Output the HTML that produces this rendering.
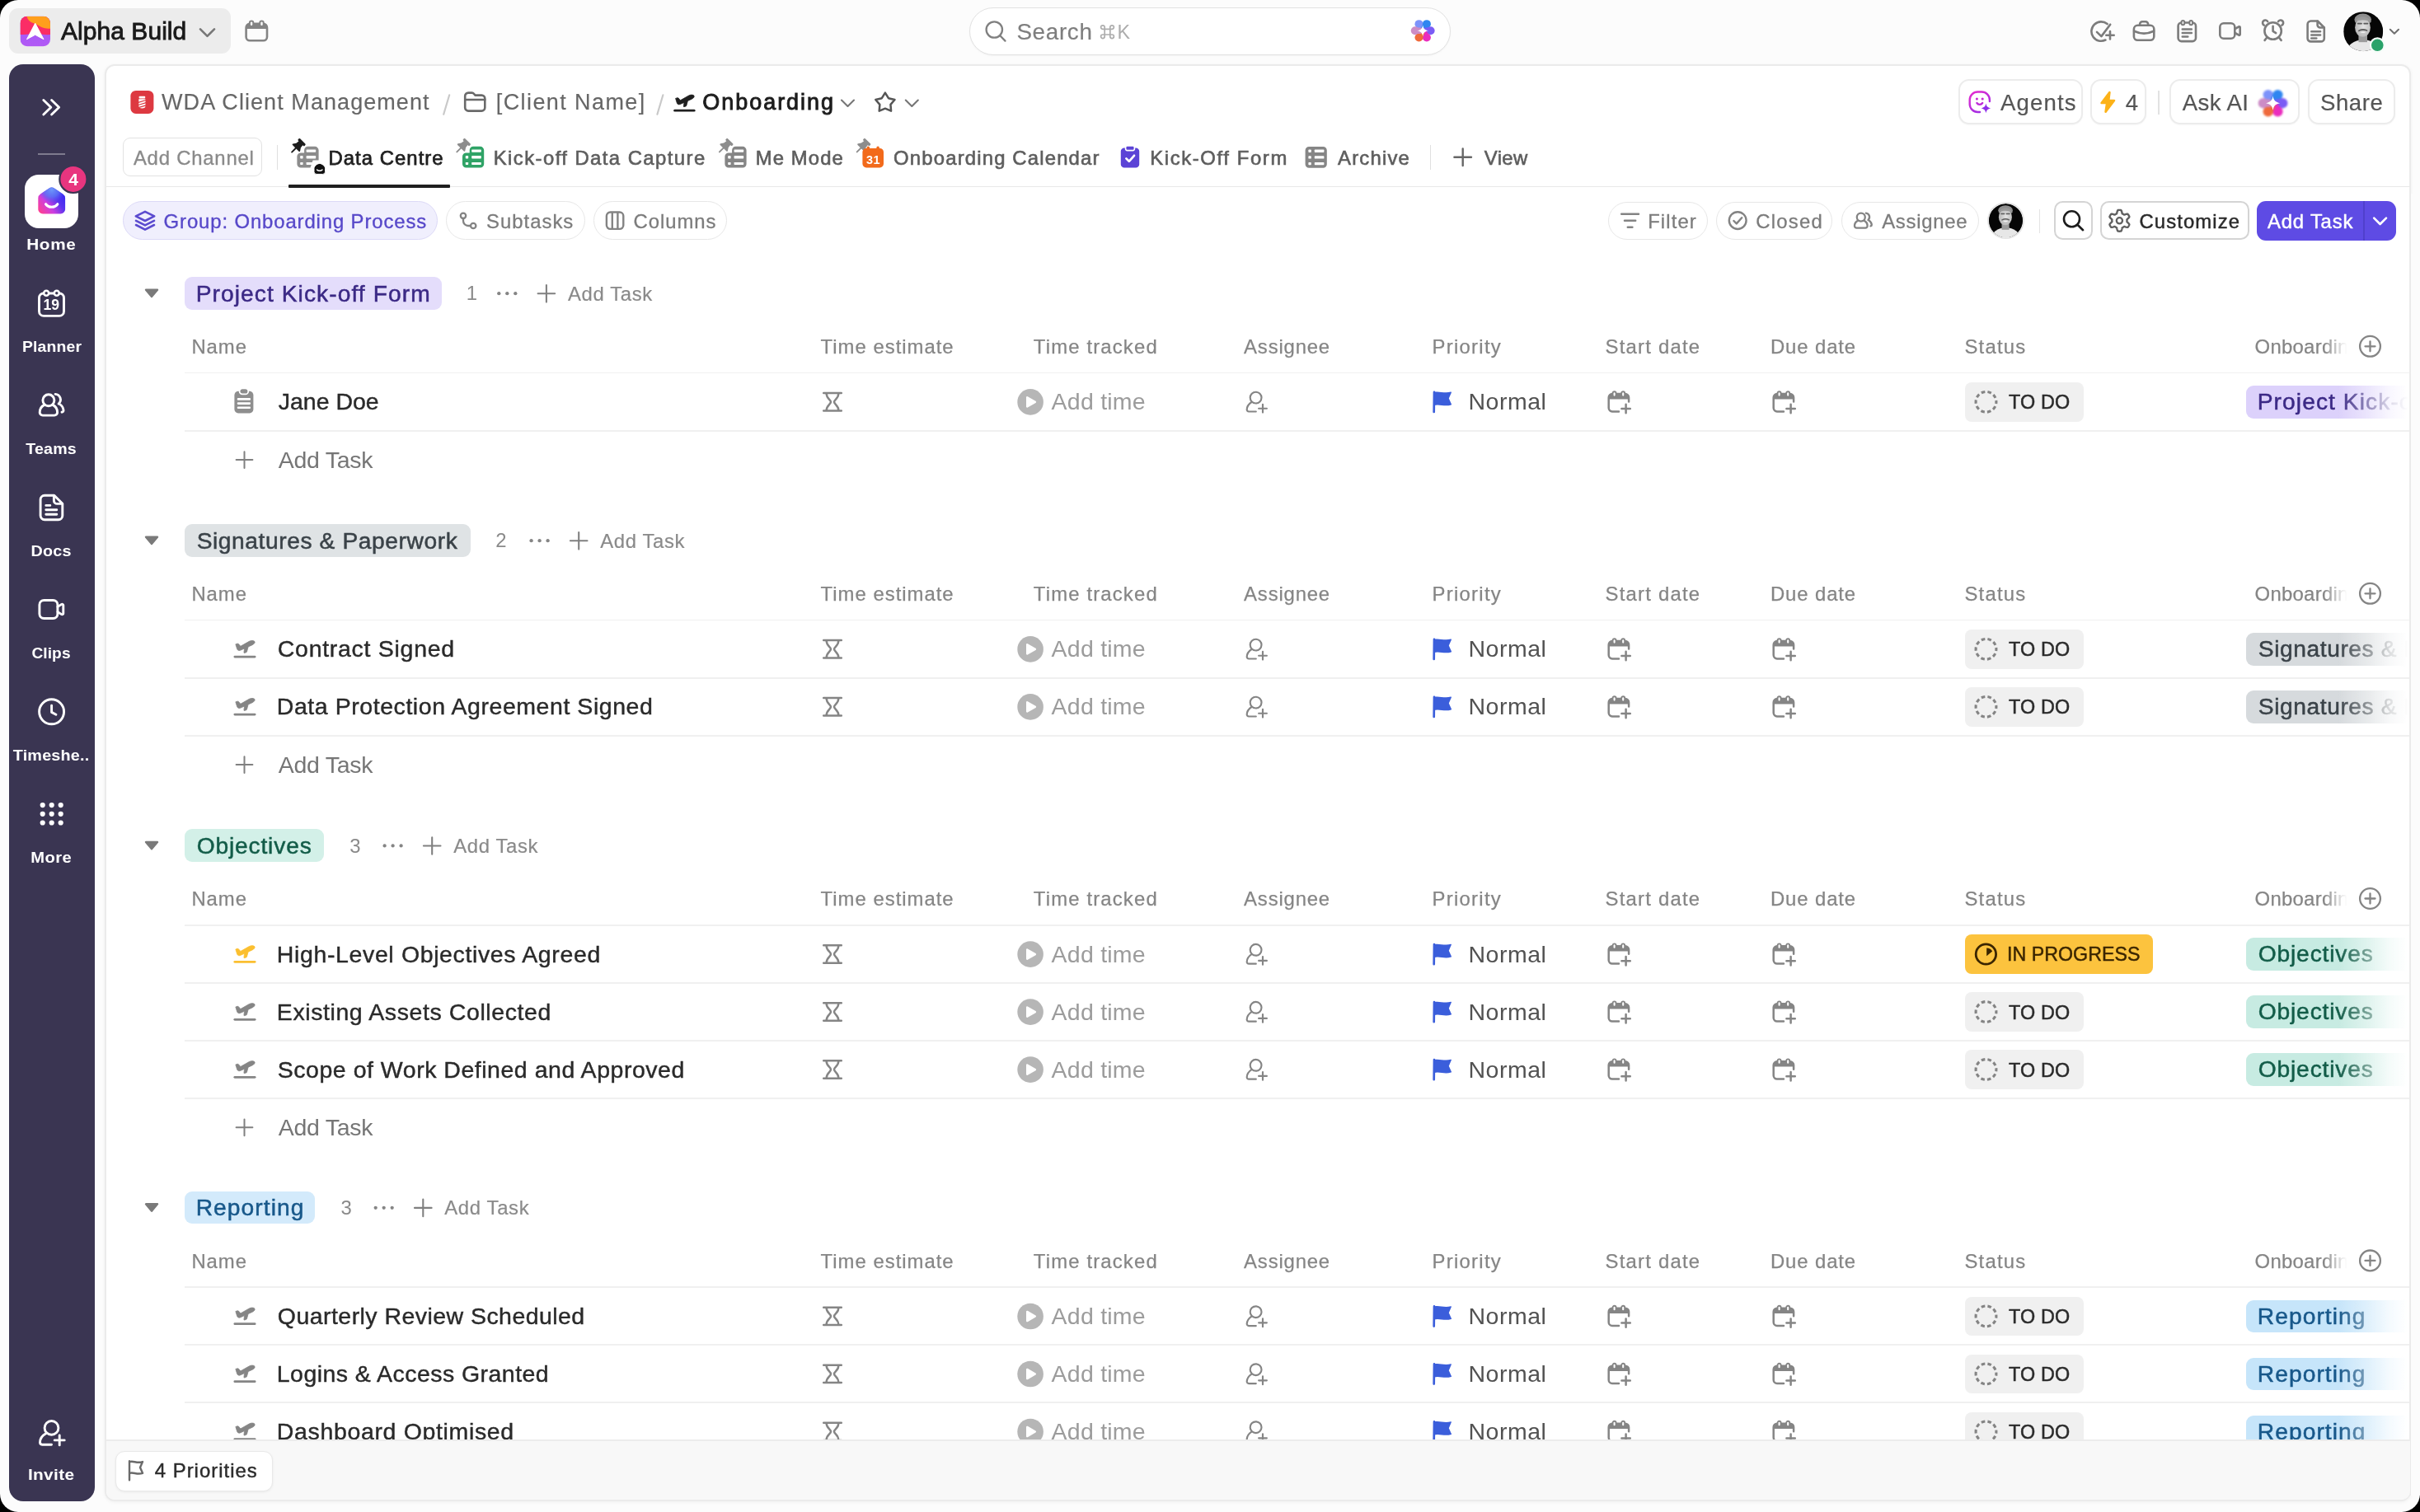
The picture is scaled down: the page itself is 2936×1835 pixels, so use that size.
<!DOCTYPE html><html><head><meta charset="utf-8"><title>ClickUp</title><style>

html,body{margin:0;padding:0;background:#000;}
body{width:2936px;height:1835px;position:relative;overflow:hidden;font-family:"Liberation Sans", sans-serif;}
#app{position:absolute;left:0;top:0;width:2936px;height:1835px;background:#fcfcfc;border-radius:22px;overflow:hidden;}
#app div{position:absolute;box-sizing:border-box;}
.t{position:absolute;white-space:nowrap;line-height:1;font-family:"Liberation Sans", sans-serif;}
svg.ic{position:absolute;left:0;top:0;overflow:visible;}
#app div.tl{left:0;top:0;width:2936px;height:1835px;will-change:transform;}

</style></head><body><div id="app">
<div style="left:10.6px;top:77.7px;width:104.2px;height:1744.3px;background:#3a3552;border-radius:17px;"></div>
<div style="left:127.0px;top:77.8px;width:2798.4px;height:1743.8px;background:#fff;border:2px solid #ebebeb;border-radius:12px;box-shadow:0 1px 4px rgba(0,0,0,.05);"></div>
<div style="left:11.0px;top:10.0px;width:268.5px;height:55.0px;background:#ececec;border-radius:11px;"></div>
<div style="left:1175.6px;top:9.0px;width:584.7px;height:58.0px;background:#fff;border:1.6px solid #e2e2e2;border-radius:29px;box-shadow:0 1px 2px rgba(0,0,0,.04);"></div>
<div style="left:46.0px;top:186.2px;width:32.6px;height:1.8px;background:rgba(255,255,255,.35);"></div>
<div style="left:30.3px;top:211.6px;width:65.0px;height:65.0px;background:#fff;border-radius:17px;"></div>
<div style="left:2376.3px;top:96.3px;width:151.2px;height:55.0px;background:#fff;border:2px solid #ececec;border-radius:13px;box-shadow:0 1px 2px rgba(0,0,0,.03);"></div>
<div style="left:2536.2px;top:96.3px;width:68.2px;height:55.0px;background:#fff;border:2px solid #ececec;border-radius:13px;box-shadow:0 1px 2px rgba(0,0,0,.03);"></div>
<div style="left:2632.1px;top:96.3px;width:158.2px;height:55.0px;background:#fff;border:2px solid #ececec;border-radius:13px;box-shadow:0 1px 2px rgba(0,0,0,.03);"></div>
<div style="left:2800.3px;top:96.3px;width:106.2px;height:55.0px;background:#fff;border:2px solid #ececec;border-radius:13px;box-shadow:0 1px 2px rgba(0,0,0,.03);"></div>
<div style="left:2617.8px;top:109.5px;width:1.8px;height:29.0px;background:#e2e2e2;"></div>
<div style="left:128.5px;top:225.6px;width:2795.0px;height:1.8px;background:#e8e8e8;"></div>
<div style="left:149.0px;top:167.3px;width:169.0px;height:46.8px;background:#fff;border:1.6px solid #e2e2e2;border-radius:9px;"></div>
<div style="left:335.8px;top:176.0px;width:1.6px;height:30.0px;background:#e0e0e0;"></div>
<div style="left:349.7px;top:223.6px;width:196.6px;height:4.2px;background:#1f1f1f;border-radius:1px;"></div>
<div style="left:1734.8px;top:175.6px;width:1.6px;height:30.0px;background:#e0e0e0;"></div>
<div style="left:148.8px;top:244.3px;width:382.4px;height:47.0px;background:#f0effd;border:1.6px solid #dcd9f7;border-radius:24px;"></div>
<div style="left:541.3px;top:244.3px;width:168.8px;height:47.0px;background:#fff;border:1.9px solid #e7e7e7;border-radius:24px;"></div>
<div style="left:719.8px;top:244.3px;width:162.4px;height:47.0px;background:#fff;border:1.9px solid #e7e7e7;border-radius:24px;"></div>
<div style="left:1950.5px;top:244.5px;width:121.0px;height:46.6px;background:#fff;border:1.9px solid #e7e7e7;border-radius:24px;"></div>
<div style="left:2081.5px;top:244.5px;width:141.7px;height:46.6px;background:#fff;border:1.9px solid #e7e7e7;border-radius:24px;"></div>
<div style="left:2233.5px;top:244.5px;width:167.4px;height:46.6px;background:#fff;border:1.9px solid #e7e7e7;border-radius:24px;"></div>
<div style="left:2473.6px;top:254.0px;width:1.6px;height:29.0px;background:#e4e4e4;"></div>
<div style="left:2491.8px;top:244.2px;width:46.8px;height:46.9px;background:#fff;border:2px solid #d4d4d4;border-radius:10.5px;"></div>
<div style="left:2548.3px;top:244.2px;width:180.6px;height:46.9px;background:#fff;border:2px solid #d4d4d4;border-radius:10.5px;"></div>
<div style="left:2737.6px;top:243.7px;width:169.7px;height:48.0px;background:#5e4be4;border-radius:11px;"></div>
<div style="left:2867.0px;top:243.7px;width:1.8px;height:48.0px;background:#5040cc;"></div>
<div style="left:224.2px;top:336.0px;width:311.4px;height:39.6px;background:#e4ddfb;border-radius:9px;"></div>
<div style="left:224.2px;top:451.6px;width:2699.4px;height:1.8px;background:#f0f0f0;"></div>
<div style="left:224.2px;top:521.8px;width:2699.4px;height:1.8px;background:#f0f0f0;"></div>
<div style="left:2383.6px;top:464.0px;width:144.2px;height:47.6px;background:#f0f0f0;border-radius:8px;"></div>
<div style="left:2725.3px;top:467.9px;width:260.0px;height:39.7px;background:#dcd1fb;border-radius:9px;"></div>
<div style="left:224.2px;top:636.0px;width:346.9px;height:39.6px;background:#dfe3e5;border-radius:9px;"></div>
<div style="left:224.2px;top:751.6px;width:2699.4px;height:1.8px;background:#f0f0f0;"></div>
<div style="left:224.2px;top:821.8px;width:2699.4px;height:1.8px;background:#f0f0f0;"></div>
<div style="left:2383.6px;top:764.0px;width:144.2px;height:47.6px;background:#f0f0f0;border-radius:8px;"></div>
<div style="left:2725.3px;top:767.9px;width:260.0px;height:39.7px;background:#d6dadd;border-radius:9px;"></div>
<div style="left:224.2px;top:891.8px;width:2699.4px;height:1.8px;background:#f0f0f0;"></div>
<div style="left:2383.6px;top:834.0px;width:144.2px;height:47.6px;background:#f0f0f0;border-radius:8px;"></div>
<div style="left:2725.3px;top:837.9px;width:260.0px;height:39.7px;background:#d6dadd;border-radius:9px;"></div>
<div style="left:224.2px;top:1006.2px;width:168.9px;height:39.6px;background:#d3f0e8;border-radius:9px;"></div>
<div style="left:224.2px;top:1121.8px;width:2699.4px;height:1.8px;background:#f0f0f0;"></div>
<div style="left:224.2px;top:1192.0px;width:2699.4px;height:1.8px;background:#f0f0f0;"></div>
<div style="left:2383.8px;top:1133.8px;width:228.6px;height:48.3px;background:#fcc33e;border-radius:8px;"></div>
<div style="left:2725.3px;top:1138.1px;width:260.0px;height:39.7px;background:#c7ebe2;border-radius:9px;"></div>
<div style="left:224.2px;top:1262.0px;width:2699.4px;height:1.8px;background:#f0f0f0;"></div>
<div style="left:2383.6px;top:1204.2px;width:144.2px;height:47.6px;background:#f0f0f0;border-radius:8px;"></div>
<div style="left:2725.3px;top:1208.1px;width:260.0px;height:39.7px;background:#c7ebe2;border-radius:9px;"></div>
<div style="left:224.2px;top:1332.0px;width:2699.4px;height:1.8px;background:#f0f0f0;"></div>
<div style="left:2383.6px;top:1274.2px;width:144.2px;height:47.6px;background:#f0f0f0;border-radius:8px;"></div>
<div style="left:2725.3px;top:1278.1px;width:260.0px;height:39.7px;background:#c7ebe2;border-radius:9px;"></div>
<div style="left:224.2px;top:1445.6px;width:158.0px;height:39.6px;background:#d3eafb;border-radius:9px;"></div>
<div style="left:224.2px;top:1561.2px;width:2699.4px;height:1.8px;background:#f0f0f0;"></div>
<div style="left:224.2px;top:1631.4px;width:2699.4px;height:1.8px;background:#f0f0f0;"></div>
<div style="left:2383.6px;top:1573.6px;width:144.2px;height:47.6px;background:#f0f0f0;border-radius:8px;"></div>
<div style="left:2725.3px;top:1577.5px;width:260.0px;height:39.7px;background:#c6e5fa;border-radius:9px;"></div>
<div style="left:224.2px;top:1701.4px;width:2699.4px;height:1.8px;background:#f0f0f0;"></div>
<div style="left:2383.6px;top:1643.6px;width:144.2px;height:47.6px;background:#f0f0f0;border-radius:8px;"></div>
<div style="left:2725.3px;top:1647.5px;width:260.0px;height:39.7px;background:#c6e5fa;border-radius:9px;"></div>
<div style="left:224.2px;top:1771.4px;width:2699.4px;height:1.8px;background:#f0f0f0;"></div>
<div style="left:2383.6px;top:1713.6px;width:144.2px;height:47.6px;background:#f0f0f0;border-radius:8px;"></div>
<div style="left:2725.3px;top:1717.5px;width:260.0px;height:39.7px;background:#c6e5fa;border-radius:9px;"></div>
<svg class="ic" width="2936" height="1835" viewBox="0 0 2936 1835">
<g transform="translate(24.50,19.70)"><defs><clipPath id="lgc"><rect x="0" y="0" width="36.5" height="36.5" rx="8.5"/></clipPath>
<linearGradient id="lgp" x1="0" y1="0" x2="0" y2="1"><stop offset="0" stop-color="#9b5cf7"/><stop offset="1" stop-color="#b259f5"/></linearGradient></defs>
<g clip-path="url(#lgc)"><rect width="37" height="37" fill="url(#lgp)"/>
<path d="M0,0H37V22.4C30,22.6 24,22.2 18,20.4 C12,22.2 6,22.6 0,22.2Z" fill="#fb2d66"/>
<path d="M8,0H37V15C30,15 26,14 22,11 C17,8 10,8 8,0Z" fill="#ff9f1c"/>
<path d="M18.2,8.5 L28.5,28 L18.2,22.5 L8,28 Z" fill="#fff" stroke="#fff" stroke-width="1" stroke-linejoin="round"/></g></g>
<g transform="translate(243.00,35.30)"><path d="M0,0 L8.5,8.5 L17,0" fill="none" stroke="#777" stroke-width="2.6" stroke-linecap="round" stroke-linejoin="round"/></g>
<g transform="translate(297.30,24.60)"><rect x="1.3" y="4.3" width="25.4" height="20.4" rx="4.5" fill="none" stroke="#848484" stroke-width="2.6"/>
<path d="M1.3,10.5V8.8a4.5,4.5 0 0 1 4.5,-4.5h16.4a4.5,4.5 0 0 1 4.5,4.5v1.7z" fill="#848484"/>
<rect x="5.6" y="0.8" width="4.4" height="6.6" rx="2.2" fill="#fcfcfc" stroke="#848484" stroke-width="2"/>
<rect x="18" y="0.8" width="4.4" height="6.6" rx="2.2" fill="#fcfcfc" stroke="#848484" stroke-width="2"/></g>
<g transform="translate(1195.30,25.00)"><circle cx="11" cy="11" r="9.7" fill="none" stroke="#808080" stroke-width="2.3"/><path d="M18,18.2L24.2,24.6" stroke="#808080" stroke-width="2.3" stroke-linecap="round"/></g>
<g transform="translate(1335.00,30.20)"><path d="M5.2,5.2H11.8V11.8H5.2Z M5.2,5.2H2.9A2.3,2.3 0 1 1 5.2,2.9Z M11.8,5.2V2.9A2.3,2.3 0 1 1 14.1,5.2Z M11.8,11.8H14.1A2.3,2.3 0 1 1 11.8,14.1Z M5.2,11.8V14.1A2.3,2.3 0 1 1 2.9,11.8Z" fill="none" stroke="#adadad" stroke-width="1.7"/></g>
<g transform="translate(1711.70,22.80) scale(1.0)"><g style="filter:blur(0.7px)"><path d="M12.75,11.47L9.80,6.36" stroke="#7d93fa" stroke-width="7.4" stroke-linecap="round"/><circle cx="9.80" cy="6.36" r="5" fill="#7d93fa"/><path d="M16.25,11.47L19.20,6.36" stroke="#2f86f0" stroke-width="7.4" stroke-linecap="round"/><circle cx="19.20" cy="6.36" r="5" fill="#2f86f0"/><path d="M18.00,14.50L23.90,14.50" stroke="#7b5cf5" stroke-width="7.4" stroke-linecap="round"/><circle cx="23.90" cy="14.50" r="5" fill="#7b5cf5"/><path d="M16.25,17.53L19.20,22.64" stroke="#ea2dbe" stroke-width="7.4" stroke-linecap="round"/><circle cx="19.20" cy="22.64" r="5" fill="#ea2dbe"/><path d="M12.75,17.53L9.80,22.64" stroke="#ef6a3c" stroke-width="7.4" stroke-linecap="round"/><circle cx="9.80" cy="22.64" r="5" fill="#ef6a3c"/><path d="M11.00,14.50L5.10,14.50" stroke="#cc8cc6" stroke-width="7.4" stroke-linecap="round"/><circle cx="5.10" cy="14.50" r="5" fill="#cc8cc6"/></g><path d="M14.5,7.6C15.3,12 17,13.7 21.4,14.5C17,15.3 15.3,17 14.5,21.4C13.7,17 12,15.3 7.6,14.5C12,13.7 13.7,12 14.5,7.6Z" fill="#fff" style="filter:blur(0.5px)"/></g>
<g transform="translate(2536.00,24.50)"><path d="M20.6,4.6A11.7,11.7 0 1 0 18.4,24" fill="none" stroke="#7c7c7c" stroke-width="2.6" stroke-linecap="round" stroke-linejoin="round"/><path d="M8,14.4L13.4,19.6L24.2,5.2" fill="none" stroke="#7c7c7c" stroke-width="2.6" stroke-linecap="round" stroke-linejoin="round"/><path d="M24,13.6V23M19.3,18.3H28.7" fill="none" stroke="#7c7c7c" stroke-width="2.6" stroke-linecap="round" stroke-linejoin="round"/></g>
<g transform="translate(2587.60,24.30)"><rect x="1.3" y="6.5" width="24.4" height="18" rx="4.5" fill="none" stroke="#7c7c7c" stroke-width="2.6" stroke-linecap="round" stroke-linejoin="round"/><path d="M8.5,6.5V5a3,3 0 0 1 3,-3h4a3,3 0 0 1 3,3v1.5" fill="none" stroke="#7c7c7c" stroke-width="2.6" stroke-linecap="round" stroke-linejoin="round"/><path d="M1.5,13.5C9,17 18,17 25.5,13.5" fill="none" stroke="#7c7c7c" stroke-width="2.6" stroke-linecap="round" stroke-linejoin="round"/></g>
<g transform="translate(2641.30,24.00)"><rect x="1.3" y="3.5" width="21.4" height="22.6" rx="4" fill="none" stroke="#7c7c7c" stroke-width="2.6" stroke-linecap="round" stroke-linejoin="round"/><rect x="5.3" y="0.9" width="3.6" height="5.4" rx="1.8" fill="#fcfcfc" stroke="#7c7c7c" stroke-width="2"/><rect x="15.1" y="0.9" width="3.6" height="5.4" rx="1.8" fill="#fcfcfc" stroke="#7c7c7c" stroke-width="2"/><path d="M6.5,11.5H17.5M6.5,16H17.5M6.5,20.5H13" fill="none" stroke="#7c7c7c" stroke-width="2.6" stroke-linecap="round" stroke-linejoin="round" stroke-width="2.2"/></g>
<g transform="translate(2692.00,27.00)"><rect x="1.3" y="1.3" width="18" height="18.4" rx="4.5" fill="none" stroke="#7c7c7c" stroke-width="2.6" stroke-linecap="round" stroke-linejoin="round"/><path d="M19.5,8L24.3,5.3a1,1 0 0 1 1.4,0.9v8.6a1,1 0 0 1 -1.4,0.9L19.5,13" fill="none" stroke="#7c7c7c" stroke-width="2.6" stroke-linecap="round" stroke-linejoin="round"/></g>
<g transform="translate(2744.60,23.50)"><circle cx="13" cy="14" r="10.2" fill="none" stroke="#7c7c7c" stroke-width="2.6" stroke-linecap="round" stroke-linejoin="round"/><path d="M13,8.3V14.3L16.6,16.6" fill="none" stroke="#7c7c7c" stroke-width="2.6" stroke-linecap="round" stroke-linejoin="round"/><path d="M2.2,7.2A3.3,3.3 0 1 1 6.6,2.6" fill="none" stroke="#7c7c7c" stroke-width="2.6" stroke-linecap="round" stroke-linejoin="round"/><path d="M23.8,7.2A3.3,3.3 0 1 0 19.4,2.6" fill="none" stroke="#7c7c7c" stroke-width="2.6" stroke-linecap="round" stroke-linejoin="round"/><path d="M5.3,22.5L3,25.4M20.7,22.5L23,25.4" fill="none" stroke="#7c7c7c" stroke-width="2.6" stroke-linecap="round" stroke-linejoin="round"/></g>
<g transform="translate(2798.30,24.20)"><path d="M5.3,1.3H13.5L21.5,9.3V22.2a4,4 0 0 1 -4,4H5.3a4,4 0 0 1 -4,-4V5.3a4,4 0 0 1 4,-4Z" fill="none" stroke="#7c7c7c" stroke-width="2.6" stroke-linecap="round" stroke-linejoin="round"/><path d="M13.3,1.5V6a3.3,3.3 0 0 0 3.3,3.3H21.3" fill="none" stroke="#7c7c7c" stroke-width="2.6" stroke-linecap="round" stroke-linejoin="round"/><path d="M6,14H16.8M6,18.3H16.8M6,22.3H12" fill="none" stroke="#7c7c7c" stroke-width="2.6" stroke-linecap="round" stroke-linejoin="round" stroke-width="2.1"/></g>
<g transform="translate(2867.20,38.20)"><defs><clipPath id="av1"><circle cx="0" cy="0" r="24"/></clipPath>
<radialGradient id="avf1" cx="0.55" cy="0.45" r="0.6"><stop offset="0" stop-color="#e4e4e4"/><stop offset="1" stop-color="#b4b4b4"/></radialGradient></defs>
<g clip-path="url(#av1)"><rect x="-24" y="-24" width="48" height="48" fill="#060606"/>
<g style="filter:blur(0.53px)">
<ellipse cx="0.0" cy="25.92" rx="20.64" ry="15.84" fill="#e7e7e7"/>
<rect x="-5.76" y="2.88" width="10.56" height="10.08" fill="#9c9c9c"/>
<ellipse cx="-0.48" cy="-14.399999999999999" rx="10.32" ry="7.199999999999999" fill="#8e8e8e"/>
<ellipse cx="-0.72" cy="-4.800000000000001" rx="9.36" ry="11.28" fill="url(#avf1)"/>
<path d="M-10.08,-12.0C-7.199999999999999,-19.68 7.199999999999999,-19.68 9.600000000000001,-11.040000000000001C4.800000000000001,-14.879999999999999 -4.800000000000001,-14.399999999999999 -10.08,-12.0Z" fill="#9a9a9a"/>
<path d="M-6.48,-9.600000000000001h4.32M0.96,-9.600000000000001h4.32" stroke="#5a5a5a" stroke-width="1.6800000000000002" stroke-linecap="round"/>
<path d="M-5.28,-0.96C-2.4000000000000004,-2.4000000000000004 1.44,-2.4000000000000004 4.32,-1.2000000000000002" stroke="#5f5f5f" stroke-width="1.7999999999999998" fill="none" stroke-linecap="round"/>
<path d="M-4.08,0.48C-1.44,2.4000000000000004 0.96,2.4000000000000004 3.3600000000000003,0.48Z" fill="#f4f4f4"/>
</g></g></g>
<g transform="translate(2884.30,54.80)"><circle cx="0" cy="0" r="8.4" fill="#29a269" stroke="#f4fcf8" stroke-width="2.2"/></g>
<g transform="translate(2899.80,35.80)"><path d="M0,0 L5.1,5 L10.2,0" fill="none" stroke="#707070" stroke-width="2" stroke-linecap="round" stroke-linejoin="round"/></g>
<g transform="translate(51.30,120.00)"><path d="M1.5,1.5L10.5,10.3L1.5,19M11.3,1.5L20.3,10.3L11.3,19" fill="none" stroke="#fff" stroke-width="2.9" stroke-linecap="round" stroke-linejoin="round"/></g>
<g transform="translate(46.20,226.60)"><defs><linearGradient id="hm" x1="0.98" y1="0.3" x2="0.05" y2="0.95"><stop offset="0" stop-color="#3a28f2"/><stop offset=".3" stop-color="#5a34ee"/><stop offset=".62" stop-color="#cc3ee0"/><stop offset="1" stop-color="#ff3f8f"/></linearGradient>
<radialGradient id="hm2" cx="0.5" cy="0.08" r="0.5"><stop offset="0" stop-color="#6f98fa"/><stop offset=".55" stop-color="#5c7cf6" stop-opacity=".75"/><stop offset="1" stop-color="#5a5cf4" stop-opacity="0"/></radialGradient></defs>
<path id="hmp" d="M13,2.1a6.2,6.2 0 0 1 7,0l10.2,6.8a6,6 0 0 1 2.7,5v13.4a5.6,5.6 0 0 1 -5.6,5.6H5.7a5.6,5.6 0 0 1 -5.6,-5.6V13.9a6,6 0 0 1 2.7,-5z" fill="url(#hm)"/>
<path d="M13,2.1a6.2,6.2 0 0 1 7,0l10.2,6.8a6,6 0 0 1 2.7,5v13.4a5.6,5.6 0 0 1 -5.6,5.6H5.7a5.6,5.6 0 0 1 -5.6,-5.6V13.9a6,6 0 0 1 2.7,-5z" fill="url(#hm2)"/>
<path d="M9.4,21.2c3.2,4.6 11,4.6 14.2,0" fill="none" stroke="#fff" stroke-width="3.2" stroke-linecap="round"/></g>
<g transform="translate(88.90,217.40)"><circle cx="0" cy="0" r="16.6" fill="#e8357f" stroke="#3a3552" stroke-width="2.2"/></g>
<g transform="translate(46.00,351.20)"><rect x="1.5" y="4.8" width="30" height="27.4" rx="5.5" fill="none" stroke="#fff" stroke-width="2.9" stroke-linecap="round" stroke-linejoin="round"/>
<circle cx="10.2" cy="4.6" r="3" fill="#3a3552" stroke="#fff" stroke-width="2.6"/><circle cx="22.8" cy="4.6" r="3" fill="#3a3552" stroke="#fff" stroke-width="2.6"/></g>
<g transform="translate(46.60,475.20)"><circle cx="12.3" cy="10.6" r="7" fill="none" stroke="#fff" stroke-width="2.9" stroke-linecap="round" stroke-linejoin="round"/><path d="M7.2,16.2C4,17.8 1.6,21.4 1.6,25.3a3.6,3.6 0 0 0 3.6,3.6H19.4a3.6,3.6 0 0 0 3.6,-3.6C23,21.4 20.6,17.8 17.4,16.2" fill="none" stroke="#fff" stroke-width="2.9" stroke-linecap="round" stroke-linejoin="round"/>
<path d="M20.5,3.2a6.6,6.6 0 0 1 4,11.6 M25.6,15.2c2.8,1.8 4.6,4.6 4.8,7.6a2,2 0 0 1 -2,2.2" fill="none" stroke="#fff" stroke-width="2.9" stroke-linecap="round" stroke-linejoin="round"/></g>
<g transform="translate(47.80,599.80)"><path d="M6.3,1.5H18L28,11.5V26a5,5 0 0 1 -5,5H6.3a5,5 0 0 1 -5,-5V6.5a5,5 0 0 1 5,-5Z" fill="none" stroke="#fff" stroke-width="2.9" stroke-linecap="round" stroke-linejoin="round"/><path d="M17.6,1.8V7.6a4,4 0 0 0 4,4H27.6" fill="none" stroke="#fff" stroke-width="2.9" stroke-linecap="round" stroke-linejoin="round"/><path d="M8,13.6H13M8,19H21M8,24.4H21" fill="none" stroke="#fff" stroke-width="2.9" stroke-linecap="round" stroke-linejoin="round" stroke-width="2.6"/></g>
<g transform="translate(46.40,727.00)"><rect x="1.5" y="1.5" width="22" height="22" rx="5.5" fill="none" stroke="#fff" stroke-width="2.9" stroke-linecap="round" stroke-linejoin="round"/><path d="M23.6,9.4L28.3,6.4a1.4,1.4 0 0 1 2.1,1.2v9.8a1.4,1.4 0 0 1 -2.1,1.2L23.6,15.6" fill="none" stroke="#fff" stroke-width="2.9" stroke-linecap="round" stroke-linejoin="round"/></g>
<g transform="translate(62.60,863.80)"><circle cx="0" cy="0" r="15" fill="none" stroke="#fff" stroke-width="2.9" stroke-linecap="round" stroke-linejoin="round"/><path d="M0,-7.5V0.6L5.4,3.4" fill="none" stroke="#fff" stroke-width="2.9" stroke-linecap="round" stroke-linejoin="round"/></g>
<g transform="translate(48.60,974.00)"><circle cx="3.1" cy="3.1" r="3.1" fill="#fff"/><circle cx="3.1" cy="13.8" r="3.1" fill="#fff"/><circle cx="3.1" cy="24.5" r="3.1" fill="#fff"/><circle cx="14.1" cy="3.1" r="3.1" fill="#fff"/><circle cx="14.1" cy="13.8" r="3.1" fill="#fff"/><circle cx="14.1" cy="24.5" r="3.1" fill="#fff"/><circle cx="25.1" cy="3.1" r="3.1" fill="#fff"/><circle cx="25.1" cy="13.8" r="3.1" fill="#fff"/><circle cx="25.1" cy="24.5" r="3.1" fill="#fff"/></g>
<g transform="translate(47.00,1722.60)"><circle cx="15.5" cy="10.3" r="8.4" fill="none" stroke="#fff" stroke-width="2.9" stroke-linecap="round" stroke-linejoin="round"/><path d="M9,17C4.5,19.6 1.5,23.8 1.5,28a2.6,2.6 0 0 0 2.6,2.6H15.5" fill="none" stroke="#fff" stroke-width="2.9" stroke-linecap="round" stroke-linejoin="round"/><path d="M25.2,19.3V31.3M19.2,25.3H31.2" fill="none" stroke="#fff" stroke-width="2.9" stroke-linecap="round" stroke-linejoin="round"/></g>
<g transform="translate(158.40,109.90)"><rect width="28" height="28" rx="6.4" fill="#dd3941"/>
<rect x="10.2" y="6.9" width="7.6" height="2.7" rx="0.9" fill="#fff"/>
<path d="M9.9,10.4H18.1V18.6a4.1,3 0 0 1 -8.2,0Z" fill="#fff"/>
<path d="M9.3,14.4L18.7,11.6M9.3,17.6L18.7,14.8M9.3,20.8L18.7,18" stroke="#dd3941" stroke-width="1.25"/></g>
<g transform="translate(538.20,115.30)"><path d="M7,0L0,23.5" stroke="#c9c9c9" stroke-width="2.2" stroke-linecap="round"/></g>
<g transform="translate(562.90,111.00)"><path d="M1.3,8.5V5.6a4,4 0 0 1 4,-4h4.4a3,3 0 0 1 2.3,1.1l1.6,1.9H21.4a4,4 0 0 1 4,4V19.6a4,4 0 0 1 -4,4H5.3a4,4 0 0 1 -4,-4Z" fill="none" stroke="#6a6a6a" stroke-width="2.6" stroke-linecap="round" stroke-linejoin="round"/><path d="M1.5,10H25.3" fill="none" stroke="#6a6a6a" stroke-width="2.6" stroke-linecap="round" stroke-linejoin="round"/></g>
<g transform="translate(797.40,115.30)"><path d="M7,0L0,23.5" stroke="#c9c9c9" stroke-width="2.2" stroke-linecap="round"/></g>
<g transform="translate(817.40,113.60) scale(1.0)"><path d="M1.2,20.6H24.8" stroke="#1f1f1f" stroke-width="2.7" stroke-linecap="round" fill="none"/>
<path d="M2.2,5.8L4.6,5.1a1,1 0 0 1 1,0.3L8,8.2L18.2,2.4C20.4,1.2 23.4,1.2 24.6,2.6C25.4,3.8 24,5.6 21.8,6.6L17,8.8L15.4,14.6a1.2,1.2 0 0 1 -0.8,0.8L12.6,16a0.5,0.5 0 0 1 -0.6,-0.6L12.6,10.8L7.6,13C6,13.6 4.6,13 4,11.6Z" fill="#1f1f1f" stroke="#1f1f1f" stroke-width="0.8" stroke-linejoin="round"/></g>
<g transform="translate(1021.00,121.60)"><path d="M0,0 L7.5,7.3 L15,0" fill="none" stroke="#757575" stroke-width="2.1" stroke-linecap="round" stroke-linejoin="round"/></g>
<g transform="translate(1061.20,111.20)"><path d="M12.70,1.40L16.76,8.02L24.30,9.83L19.26,15.73L19.87,23.47L12.70,20.50L5.53,23.47L6.14,15.73L1.10,9.83L8.64,8.02Z" fill="none" stroke="#555" stroke-width="2.5" stroke-linejoin="round"/></g>
<g transform="translate(1098.80,121.60)"><path d="M0,0 L7.5,7.3 L15,0" fill="none" stroke="#757575" stroke-width="2.1" stroke-linecap="round" stroke-linejoin="round"/></g>
<g transform="translate(2388.60,110.40)"><defs><linearGradient id="ag" x1="0.2" y1="0" x2="0.8" y2="1"><stop offset="0" stop-color="#e02bd0"/><stop offset="1" stop-color="#9a2fe6"/></linearGradient></defs>
<path d="M13.4,25.6H10.8a9.7,9.7 0 0 1 -9.7,-9.7V10.8a9.7,9.7 0 0 1 9.7,-9.7h4.8a9.7,9.7 0 0 1 9.7,9.7V12.6" fill="none" stroke="url(#ag)" stroke-width="2.4" stroke-linecap="round"/>
<circle cx="9.8" cy="9.6" r="1.55" fill="#c92ad6"/><circle cx="16.6" cy="9.6" r="1.55" fill="#c92ad6"/>
<path d="M9.8,14.6c1.6,2.4 5.2,2.4 6.8,0" fill="none" stroke="#bf2ad9" stroke-width="2.3" stroke-linecap="round"/>
<path d="M20.8,15.2c0.8,3.8 2,5 5.8,5.8c-3.8,0.8 -5,2 -5.8,5.8c-0.8,-3.8 -2,-5 -5.8,-5.8c3.8,-0.8 5,-2 5.8,-5.8z" fill="#8f2eea"/></g>
<g transform="translate(2547.60,110.00)"><path d="M11.8,2L2,15H8.6L7,25.6L17.4,12H10.6Z" fill="#fcb218" stroke="#fcb218" stroke-width="2.6" stroke-linejoin="round"/></g>
<g transform="translate(2739.60,107.20) scale(1.24)"><g style="filter:blur(0.7px)"><path d="M12.75,11.47L9.80,6.36" stroke="#7d93fa" stroke-width="7.4" stroke-linecap="round"/><circle cx="9.80" cy="6.36" r="5" fill="#7d93fa"/><path d="M16.25,11.47L19.20,6.36" stroke="#2f86f0" stroke-width="7.4" stroke-linecap="round"/><circle cx="19.20" cy="6.36" r="5" fill="#2f86f0"/><path d="M18.00,14.50L23.90,14.50" stroke="#7b5cf5" stroke-width="7.4" stroke-linecap="round"/><circle cx="23.90" cy="14.50" r="5" fill="#7b5cf5"/><path d="M16.25,17.53L19.20,22.64" stroke="#ea2dbe" stroke-width="7.4" stroke-linecap="round"/><circle cx="19.20" cy="22.64" r="5" fill="#ea2dbe"/><path d="M12.75,17.53L9.80,22.64" stroke="#ef6a3c" stroke-width="7.4" stroke-linecap="round"/><circle cx="9.80" cy="22.64" r="5" fill="#ef6a3c"/><path d="M11.00,14.50L5.10,14.50" stroke="#cc8cc6" stroke-width="7.4" stroke-linecap="round"/><circle cx="5.10" cy="14.50" r="5" fill="#cc8cc6"/></g><path d="M14.5,7.6C15.3,12 17,13.7 21.4,14.5C17,15.3 15.3,17 14.5,21.4C13.7,17 12,15.3 7.6,14.5C12,13.7 13.7,12 14.5,7.6Z" fill="#fff" style="filter:blur(0.5px)"/></g>
<g transform="translate(351.80,168.60)"><g transform="translate(11.2,-1.4) rotate(45)"><path d="M1.6,0H10.4a1.1,1.1 0 0 1 1.1,1.1V2.2a1.1,1.1 0 0 1 -1.1,1.1H9.4L9.9,7.2L12.2,10.6a0.9,0.9 0 0 1 -0.8,1.4H0.6a0.9,0.9 0 0 1 -0.8,-1.4L2.1,7.2L2.6,3.3H1.6A1.1,1.1 0 0 1 0.5,2.2V1.1A1.1,1.1 0 0 1 1.6,0Z" fill="#1c1c1c"/><path d="M6,11.8V18.6" stroke="#1c1c1c" stroke-width="1.9" stroke-linecap="round"/></g></g>
<g transform="translate(360.40,177.80)"><path d="M13.2,0H21.6a4.6,4.6 0 0 1 4.6,4.6V21.2a4.6,4.6 0 0 1 -4.6,4.6H4.6a4.6,4.6 0 0 1 -4.6,-4.6V12.2a4.5,4.5 0 0 1 4.5,-4.5H8.7V4.5A4.5,4.5 0 0 1 13.2,0Z" fill="#8c8c8c"/><rect x="11.2" y="3.6" width="11.6" height="3.3" rx="0.7" fill="#fff"/><rect x="11.2" y="11.3" width="11.6" height="3.3" rx="0.7" fill="#fff"/><rect x="11.2" y="19.1" width="11.6" height="3.1" rx="0.7" fill="#fff"/><rect x="3.8" y="11.3" width="3.4" height="3.3" rx="0.7" fill="#fff"/><rect x="3.8" y="19.1" width="3.4" height="3.1" rx="0.7" fill="#fff"/><path d="M19.2,16.8H28V28H15.4Z" fill="#fff"/></g>
<g transform="translate(380.80,198.20)"><path d="M7,0.2C9.4,0.2 13.8,3.2 13.8,6V10.2a3,3 0 0 1 -3,3H3.2a3,3 0 0 1 -3,-3V6C0.2,3.2 4.6,0.2 7,0.2Z" fill="#111" stroke="#fff" stroke-width="1"/><path d="M3.8,7.8c1.6,1.8 4.8,1.8 6.4,0" stroke="#fff" stroke-width="1.5" fill="none" stroke-linecap="round"/></g>
<g transform="translate(552.00,168.40)"><g transform="translate(11.2,-1.4) rotate(45)"><path d="M1.6,0H10.4a1.1,1.1 0 0 1 1.1,1.1V2.2a1.1,1.1 0 0 1 -1.1,1.1H9.4L9.9,7.2L12.2,10.6a0.9,0.9 0 0 1 -0.8,1.4H0.6a0.9,0.9 0 0 1 -0.8,-1.4L2.1,7.2L2.6,3.3H1.6A1.1,1.1 0 0 1 0.5,2.2V1.1A1.1,1.1 0 0 1 1.6,0Z" fill="#8d8d8d"/><path d="M6,11.8V18.6" stroke="#8d8d8d" stroke-width="1.9" stroke-linecap="round"/></g></g>
<g transform="translate(561.00,177.80)"><path d="M13.2,0H21.6a4.6,4.6 0 0 1 4.6,4.6V21.2a4.6,4.6 0 0 1 -4.6,4.6H4.6a4.6,4.6 0 0 1 -4.6,-4.6V12.2a4.5,4.5 0 0 1 4.5,-4.5H8.7V4.5A4.5,4.5 0 0 1 13.2,0Z" fill="#2fa366"/><rect x="11.2" y="3.6" width="11.6" height="3.3" rx="0.7" fill="#fff"/><rect x="11.2" y="11.3" width="11.6" height="3.3" rx="0.7" fill="#fff"/><rect x="11.2" y="19.1" width="11.6" height="3.1" rx="0.7" fill="#fff"/><rect x="3.8" y="11.3" width="3.4" height="3.3" rx="0.7" fill="#fff"/><rect x="3.8" y="19.1" width="3.4" height="3.1" rx="0.7" fill="#fff"/></g>
<g transform="translate(870.60,168.40)"><g transform="translate(11.2,-1.4) rotate(45)"><path d="M1.6,0H10.4a1.1,1.1 0 0 1 1.1,1.1V2.2a1.1,1.1 0 0 1 -1.1,1.1H9.4L9.9,7.2L12.2,10.6a0.9,0.9 0 0 1 -0.8,1.4H0.6a0.9,0.9 0 0 1 -0.8,-1.4L2.1,7.2L2.6,3.3H1.6A1.1,1.1 0 0 1 0.5,2.2V1.1A1.1,1.1 0 0 1 1.6,0Z" fill="#8d8d8d"/><path d="M6,11.8V18.6" stroke="#8d8d8d" stroke-width="1.9" stroke-linecap="round"/></g></g>
<g transform="translate(879.40,177.80)"><path d="M13.2,0H21.6a4.6,4.6 0 0 1 4.6,4.6V21.2a4.6,4.6 0 0 1 -4.6,4.6H4.6a4.6,4.6 0 0 1 -4.6,-4.6V12.2a4.5,4.5 0 0 1 4.5,-4.5H8.7V4.5A4.5,4.5 0 0 1 13.2,0Z" fill="#858585"/><rect x="11.2" y="3.6" width="11.6" height="3.3" rx="0.7" fill="#fff"/><rect x="11.2" y="11.3" width="11.6" height="3.3" rx="0.7" fill="#fff"/><rect x="11.2" y="19.1" width="11.6" height="3.1" rx="0.7" fill="#fff"/><rect x="3.8" y="11.3" width="3.4" height="3.3" rx="0.7" fill="#fff"/><rect x="3.8" y="19.1" width="3.4" height="3.1" rx="0.7" fill="#fff"/></g>
<g transform="translate(1037.40,168.40)"><g transform="translate(11.2,-1.4) rotate(45)"><path d="M1.6,0H10.4a1.1,1.1 0 0 1 1.1,1.1V2.2a1.1,1.1 0 0 1 -1.1,1.1H9.4L9.9,7.2L12.2,10.6a0.9,0.9 0 0 1 -0.8,1.4H0.6a0.9,0.9 0 0 1 -0.8,-1.4L2.1,7.2L2.6,3.3H1.6A1.1,1.1 0 0 1 0.5,2.2V1.1A1.1,1.1 0 0 1 1.6,0Z" fill="#8d8d8d"/><path d="M6,11.8V18.6" stroke="#8d8d8d" stroke-width="1.9" stroke-linecap="round"/></g></g>
<g transform="translate(1046.00,177.40)"><path d="M5,2.6H21.4a4.6,4.6 0 0 1 4.6,4.6V21.4a4.6,4.6 0 0 1 -4.6,4.6H5A4.6,4.6 0 0 1 0.4,21.4V7.2A4.6,4.6 0 0 1 5,2.6Z" fill="#f26a1b"/>
<rect x="5.6" y="0" width="3.4" height="5.6" rx="1.7" fill="#f26a1b"/><rect x="17.4" y="0" width="3.4" height="5.6" rx="1.7" fill="#f26a1b"/></g>
<g transform="translate(1359.60,176.80)"><path d="M4.4,2.6H18.4A4.2,4.2 0 0 1 22.6,6.8V22.6A4.2,4.2 0 0 1 18.4,26.8H4.4A4.2,4.2 0 0 1 0.2,22.6V6.8A4.2,4.2 0 0 1 4.4,2.6Z" fill="#5b43d6"/>
<rect x="6" y="0.2" width="10.8" height="5.6" rx="2" fill="#5b43d6" stroke="#fff" stroke-width="1.6"/>
<path d="M6.8,15.6L10.2,19L16.4,12" fill="none" stroke="#fff" stroke-width="2.7" stroke-linecap="round" stroke-linejoin="round"/></g>
<g transform="translate(1583.60,178.00)"><path d="M4.6,0H21.6a4.6,4.6 0 0 1 4.6,4.6V21.2a4.6,4.6 0 0 1 -4.6,4.6H4.6a4.6,4.6 0 0 1 -4.6,-4.6V4.6A4.6,4.6 0 0 1 4.6,0Z" fill="#858585"/><rect x="11.2" y="3.6" width="11.6" height="3.3" rx="0.7" fill="#fff"/><rect x="11.2" y="11.3" width="11.6" height="3.3" rx="0.7" fill="#fff"/><rect x="11.2" y="19.1" width="11.6" height="3.1" rx="0.7" fill="#fff"/><rect x="3.8" y="11.3" width="3.4" height="3.3" rx="0.7" fill="#fff"/><rect x="3.8" y="19.1" width="3.4" height="3.1" rx="0.7" fill="#fff"/><rect x="3.8" y="3.6" width="3.4" height="3.3" rx="0.7" fill="#fff"/></g>
<g transform="translate(1764.40,180.40)"><path d="M10.3,0V20.6M0,10.3H20.6" stroke="#666" stroke-width="2.4" stroke-linecap="round"/></g>
<g transform="translate(163.60,255.60)"><path d="M12.4,1.2L23.6,6.8L12.4,12.4L1.2,6.8Z" fill="none" stroke="#5b4bcf" stroke-width="2.6" stroke-linejoin="round"/>
<path d="M1.4,12.2L12.4,17.8L23.4,12.2M1.4,17.4L12.4,23L23.4,17.4" fill="none" stroke="#5b4bcf" stroke-width="2.6" stroke-linejoin="round" stroke-linecap="round"/></g>
<g transform="translate(557.60,257.40)"><circle cx="4.4" cy="4.4" r="3.2" fill="none" stroke="#838383" stroke-width="2.3"/><circle cx="16.6" cy="16.6" r="3.2" fill="none" stroke="#838383" stroke-width="2.3"/><path d="M4.4,7.8V10.6a6,6 0 0 0 6,6H13.2" fill="none" stroke="#838383" stroke-width="2.3"/></g>
<g transform="translate(734.60,256.20)"><rect x="1.3" y="1.3" width="20.4" height="20.4" rx="4.6" fill="none" stroke="#838383" stroke-width="2.4"/><path d="M8.2,1.3V21.7M14.8,1.3V21.7" stroke="#838383" stroke-width="2.4"/></g>
<g transform="translate(1966.00,258.40)"><path d="M1.2,1.4H22M5,9.4H18.2M8.8,17.4H14.4" stroke="#838383" stroke-width="2.5" stroke-linecap="round"/></g>
<g transform="translate(2096.20,255.60)"><circle cx="12" cy="12" r="10.4" fill="none" stroke="#838383" stroke-width="2.4"/><path d="M7.2,12.4L10.6,15.8L17,8.6" fill="none" stroke="#838383" stroke-width="2.4" stroke-linecap="round" stroke-linejoin="round"/></g>
<g transform="translate(2248.80,256.20)"><circle cx="9" cy="7.4" r="5" fill="none" stroke="#838383" stroke-width="2.3"/><path d="M5.4,11.4C3,12.6 1.2,15.2 1.2,18a2.4,2.4 0 0 0 2.4,2.4H14.4a2.4,2.4 0 0 0 2.4,-2.4C16.8,15.2 15,12.6 12.6,11.4" fill="none" stroke="#838383" stroke-width="2.3" stroke-linecap="round"/>
<path d="M15,2.4a4.8,4.8 0 0 1 2.6,8.4M18.6,11.2c2,1.2 3.2,3.2 3.4,5.4a1.6,1.6 0 0 1 -1.4,1.6" fill="none" stroke="#838383" stroke-width="2.3" stroke-linecap="round"/></g>
<g transform="translate(2433.50,267.70)"><defs><clipPath id="av2"><circle cx="0" cy="0" r="20.6"/></clipPath>
<radialGradient id="avf2" cx="0.55" cy="0.45" r="0.6"><stop offset="0" stop-color="#e4e4e4"/><stop offset="1" stop-color="#b4b4b4"/></radialGradient></defs>
<g clip-path="url(#av2)"><rect x="-20.6" y="-20.6" width="41.2" height="41.2" fill="#060606"/>
<g style="filter:blur(0.45px)">
<ellipse cx="0.0" cy="22.248000000000005" rx="17.716" ry="13.596000000000002" fill="#e7e7e7"/>
<rect x="-4.944" y="2.472" width="9.064" height="8.652000000000001" fill="#9c9c9c"/>
<ellipse cx="-0.41200000000000003" cy="-12.360000000000001" rx="8.858" ry="6.180000000000001" fill="#8e8e8e"/>
<ellipse cx="-0.618" cy="-4.12" rx="8.034" ry="9.682" fill="url(#avf2)"/>
<path d="M-8.652000000000001,-10.3C-6.180000000000001,-16.892 6.180000000000001,-16.892 8.24,-9.476C4.12,-12.772 -4.12,-12.360000000000001 -8.652000000000001,-10.3Z" fill="#9a9a9a"/>
<path d="M-5.562000000000001,-8.24h3.708M0.8240000000000001,-8.24h3.708" stroke="#5a5a5a" stroke-width="1.4420000000000002" stroke-linecap="round"/>
<path d="M-4.532,-0.8240000000000001C-2.06,-2.06 1.236,-2.06 3.708,-1.03" stroke="#5f5f5f" stroke-width="1.5450000000000002" fill="none" stroke-linecap="round"/>
<path d="M-3.5020000000000007,0.41200000000000003C-1.236,2.06 0.8240000000000001,2.06 2.8840000000000003,0.41200000000000003Z" fill="#f4f4f4"/>
</g></g></g>
<g transform="translate(2433.50,267.70)"><circle cx="0" cy="0" r="21.6" fill="none" stroke="#e4e4e4" stroke-width="1.6"/></g>
<g transform="translate(2502.90,255.20)"><circle cx="10.6" cy="10.6" r="9.5" fill="none" stroke="#1c1c1c" stroke-width="2.6"/><path d="M17.6,17.6L24.2,24" stroke="#1c1c1c" stroke-width="2.6" stroke-linecap="round"/></g>
<g transform="translate(2558.40,254.80)"><path d="M25.90,13.00L25.89,13.45L25.87,13.90L25.83,14.35L25.77,14.80L25.42,15.19L24.74,15.49L24.00,15.74L23.25,15.94L22.51,16.09L21.82,16.21L21.44,16.41L21.31,16.70L21.18,16.99L21.03,17.27L20.88,17.55L20.72,17.82L20.54,18.09L20.36,18.35L20.17,18.60L20.19,19.03L20.43,19.69L20.67,20.41L20.88,21.16L21.03,21.92L21.11,22.66L20.94,23.17L20.58,23.44L20.21,23.69L19.84,23.94L19.45,24.17L19.06,24.39L18.65,24.59L18.25,24.78L17.83,24.96L17.31,24.85L16.71,24.41L16.13,23.90L15.58,23.35L15.08,22.78L14.63,22.24L14.27,22.01L13.95,22.05L13.63,22.08L13.32,22.09L13.00,22.10L12.68,22.09L12.37,22.08L12.05,22.05L11.73,22.01L11.37,22.24L10.92,22.78L10.42,23.35L9.87,23.90L9.29,24.41L8.69,24.85L8.17,24.96L7.75,24.78L7.35,24.59L6.94,24.39L6.55,24.17L6.16,23.94L5.79,23.69L5.42,23.44L5.06,23.17L4.89,22.66L4.97,21.92L5.12,21.16L5.33,20.41L5.57,19.69L5.81,19.03L5.83,18.60L5.64,18.35L5.46,18.09L5.28,17.82L5.12,17.55L4.97,17.27L4.82,16.99L4.69,16.70L4.56,16.41L4.18,16.21L3.49,16.09L2.75,15.94L2.00,15.74L1.26,15.49L0.58,15.19L0.23,14.80L0.17,14.35L0.13,13.90L0.11,13.45L0.10,13.00L0.11,12.55L0.13,12.10L0.17,11.65L0.23,11.20L0.58,10.81L1.26,10.51L2.00,10.26L2.75,10.06L3.49,9.91L4.18,9.79L4.56,9.59L4.69,9.30L4.82,9.01L4.97,8.73L5.12,8.45L5.28,8.18L5.46,7.91L5.64,7.65L5.83,7.40L5.81,6.97L5.57,6.31L5.33,5.59L5.12,4.84L4.97,4.08L4.89,3.34L5.06,2.83L5.42,2.56L5.79,2.31L6.16,2.06L6.55,1.83L6.94,1.61L7.35,1.41L7.75,1.22L8.17,1.04L8.69,1.15L9.29,1.59L9.87,2.10L10.42,2.65L10.92,3.22L11.37,3.76L11.73,3.99L12.05,3.95L12.37,3.92L12.68,3.91L13.00,3.90L13.32,3.91L13.63,3.92L13.95,3.95L14.27,3.99L14.63,3.76L15.08,3.22L15.58,2.65L16.13,2.10L16.71,1.59L17.31,1.15L17.83,1.04L18.25,1.22L18.65,1.41L19.06,1.61L19.45,1.83L19.84,2.06L20.21,2.31L20.58,2.56L20.94,2.83L21.11,3.34L21.03,4.08L20.88,4.84L20.67,5.59L20.43,6.31L20.19,6.97L20.17,7.40L20.36,7.65L20.54,7.91L20.72,8.18L20.88,8.45L21.03,8.73L21.18,9.01L21.31,9.30L21.44,9.59L21.82,9.79L22.51,9.91L23.25,10.06L24.00,10.26L24.74,10.51L25.42,10.81L25.77,11.20L25.83,11.65L25.87,12.10L25.89,12.55Z" transform="rotate(30 13 13)" fill="none" stroke="#606060" stroke-width="2.4" stroke-linejoin="round"/><circle cx="13" cy="13" r="3.6" fill="none" stroke="#606060" stroke-width="2.3"/></g>
<g transform="translate(2880.20,264.60)"><path d="M0,0 L7.4,7.4 L14.8,0" fill="none" stroke="#fff" stroke-width="2.6" stroke-linecap="round" stroke-linejoin="round"/></g>
<g transform="translate(175.40,350.30)"><path d="M1.6,1.4H15.6L8.6,9.8Z" fill="#7a7a7a" stroke="#7a7a7a" stroke-width="2.4" stroke-linejoin="round"/></g>
<g transform="translate(602.70,356.20)"><circle cx="2.6" cy="0" r="2.15" fill="#858585"/><circle cx="12.6" cy="0" r="2.15" fill="#858585"/><circle cx="22.6" cy="0" r="2.15" fill="#858585"/></g>
<g transform="translate(652.60,346.00)"><path d="M10.3,0V20.6M0,10.3H20.6" stroke="#808080" stroke-width="2.1" stroke-linecap="round"/></g>
<g transform="translate(284.40,470.80)"><rect x="0" y="4" width="23" height="26.6" rx="4.6" fill="#8e8e8e"/><rect x="6.2" y="0.6" width="10.6" height="7" rx="3.4" fill="#8e8e8e" stroke="#fff" stroke-width="1.7"/>
<path d="M4.6,13.6H18.4M4.6,18.8H18.4M4.6,24H18.4" stroke="#fff" stroke-width="2.6" stroke-linecap="round"/></g>
<g transform="translate(998.00,475.80)"><path d="M1.2,1.3H22.8M1.2,22.7H22.8" stroke="#858585" stroke-width="2.5" stroke-linecap="round" fill="none"/>
<path d="M4.6,1.5C4.6,8 10,9.2 10,12C10,14.8 4.6,16 4.6,22.5M19.4,1.5C19.4,8 14,9.2 14,12C14,14.8 19.4,16 19.4,22.5" stroke="#858585" stroke-width="2.5" fill="none"/></g>
<g transform="translate(1250.10,487.90)"><circle cx="0" cy="0" r="15.8" fill="#b6b6b6"/><path d="M-3.9,-5.6L5.8,0L-3.9,5.6Z" fill="#fff" stroke="#fff" stroke-width="2.4" stroke-linejoin="round"/></g>
<g transform="translate(1511.40,474.40)"><circle cx="12.2" cy="8.2" r="6.9" fill="none" stroke="#858585" stroke-width="2.15"/>
<path d="M7,13.6C3.6,16 1.4,19.4 1.3,22.6a2.4,2.4 0 0 0 2.4,2.5H12.4" fill="none" stroke="#858585" stroke-width="2.15" stroke-linecap="round"/>
<path d="M20.6,16.4V26.2M15.7,21.3H25.5" stroke="#858585" stroke-width="2.15" stroke-linecap="round"/></g>
<g transform="translate(1738.40,474.40)"><path d="M1.6,1.4L1.3,25.6" stroke="#3b5edb" stroke-width="2.7" stroke-linecap="round"/>
<path d="M1.6,1.6C7,-0.2 14,3.4 21.8,1.2a0.6,0.6 0 0 1 0.7,0.8L19.4,9.2L22.6,16.2a0.6,0.6 0 0 1 -0.4,0.8C14,19.4 7.4,15.6 1.5,17.6Z" fill="#3b5edb"/></g>
<g transform="translate(1950.40,474.20)"><path d="M13.6,25.2H5.6a4.3,4.3 0 0 1 -4.3,-4.3V8.2a4.3,4.3 0 0 1 4.3,-4.3H21.4a4.3,4.3 0 0 1 4.3,4.3V13.4" fill="none" stroke="#858585" stroke-width="2.5" stroke-linecap="round"/>
<path d="M1.3,10.2V8.2a4.3,4.3 0 0 1 4.3,-4.3H21.4a4.3,4.3 0 0 1 4.3,4.3v2z" fill="#858585"/>
<rect x="6.2" y="1" width="4" height="6.4" rx="2" fill="#fff" stroke="#858585" stroke-width="1.9"/><rect x="16.8" y="1" width="4" height="6.4" rx="2" fill="#fff" stroke="#858585" stroke-width="1.9"/>
<path d="M22.2,16.6V27M17,21.8H27.4" stroke="#858585" stroke-width="2.5" stroke-linecap="round"/></g>
<g transform="translate(2150.40,474.20)"><path d="M13.6,25.2H5.6a4.3,4.3 0 0 1 -4.3,-4.3V8.2a4.3,4.3 0 0 1 4.3,-4.3H21.4a4.3,4.3 0 0 1 4.3,4.3V13.4" fill="none" stroke="#858585" stroke-width="2.5" stroke-linecap="round"/>
<path d="M1.3,10.2V8.2a4.3,4.3 0 0 1 4.3,-4.3H21.4a4.3,4.3 0 0 1 4.3,4.3v2z" fill="#858585"/>
<rect x="6.2" y="1" width="4" height="6.4" rx="2" fill="#fff" stroke="#858585" stroke-width="1.9"/><rect x="16.8" y="1" width="4" height="6.4" rx="2" fill="#fff" stroke="#858585" stroke-width="1.9"/>
<path d="M22.2,16.6V27M17,21.8H27.4" stroke="#858585" stroke-width="2.5" stroke-linecap="round"/></g>
<g transform="translate(2409.50,487.80)"><circle cx="0" cy="0" r="12.4" fill="none" stroke="#848484" stroke-width="3.1" stroke-dasharray="4.6 3.19" stroke-dashoffset="2.3"/></g>
<g transform="translate(286.60,548.20)"><path d="M9.9,0V19.8M0,9.9H19.8" stroke="#808080" stroke-width="2.0" stroke-linecap="round"/></g>
<g transform="translate(175.40,650.30)"><path d="M1.6,1.4H15.6L8.6,9.8Z" fill="#7a7a7a" stroke="#7a7a7a" stroke-width="2.4" stroke-linejoin="round"/></g>
<g transform="translate(642.00,656.20)"><circle cx="2.6" cy="0" r="2.15" fill="#858585"/><circle cx="12.6" cy="0" r="2.15" fill="#858585"/><circle cx="22.6" cy="0" r="2.15" fill="#858585"/></g>
<g transform="translate(691.90,646.00)"><path d="M10.3,0V20.6M0,10.3H20.6" stroke="#808080" stroke-width="2.1" stroke-linecap="round"/></g>
<g transform="translate(283.60,775.90) scale(1.03)"><path d="M1.2,20.6H24.8" stroke="#858585" stroke-width="2.7" stroke-linecap="round" fill="none"/>
<path d="M2.2,5.8L4.6,5.1a1,1 0 0 1 1,0.3L8,8.2L18.2,2.4C20.4,1.2 23.4,1.2 24.6,2.6C25.4,3.8 24,5.6 21.8,6.6L17,8.8L15.4,14.6a1.2,1.2 0 0 1 -0.8,0.8L12.6,16a0.5,0.5 0 0 1 -0.6,-0.6L12.6,10.8L7.6,13C6,13.6 4.6,13 4,11.6Z" fill="#858585" stroke="#858585" stroke-width="0.8" stroke-linejoin="round"/></g>
<g transform="translate(998.00,775.80)"><path d="M1.2,1.3H22.8M1.2,22.7H22.8" stroke="#858585" stroke-width="2.5" stroke-linecap="round" fill="none"/>
<path d="M4.6,1.5C4.6,8 10,9.2 10,12C10,14.8 4.6,16 4.6,22.5M19.4,1.5C19.4,8 14,9.2 14,12C14,14.8 19.4,16 19.4,22.5" stroke="#858585" stroke-width="2.5" fill="none"/></g>
<g transform="translate(1250.10,787.90)"><circle cx="0" cy="0" r="15.8" fill="#b6b6b6"/><path d="M-3.9,-5.6L5.8,0L-3.9,5.6Z" fill="#fff" stroke="#fff" stroke-width="2.4" stroke-linejoin="round"/></g>
<g transform="translate(1511.40,774.40)"><circle cx="12.2" cy="8.2" r="6.9" fill="none" stroke="#858585" stroke-width="2.15"/>
<path d="M7,13.6C3.6,16 1.4,19.4 1.3,22.6a2.4,2.4 0 0 0 2.4,2.5H12.4" fill="none" stroke="#858585" stroke-width="2.15" stroke-linecap="round"/>
<path d="M20.6,16.4V26.2M15.7,21.3H25.5" stroke="#858585" stroke-width="2.15" stroke-linecap="round"/></g>
<g transform="translate(1738.40,774.40)"><path d="M1.6,1.4L1.3,25.6" stroke="#3b5edb" stroke-width="2.7" stroke-linecap="round"/>
<path d="M1.6,1.6C7,-0.2 14,3.4 21.8,1.2a0.6,0.6 0 0 1 0.7,0.8L19.4,9.2L22.6,16.2a0.6,0.6 0 0 1 -0.4,0.8C14,19.4 7.4,15.6 1.5,17.6Z" fill="#3b5edb"/></g>
<g transform="translate(1950.40,774.20)"><path d="M13.6,25.2H5.6a4.3,4.3 0 0 1 -4.3,-4.3V8.2a4.3,4.3 0 0 1 4.3,-4.3H21.4a4.3,4.3 0 0 1 4.3,4.3V13.4" fill="none" stroke="#858585" stroke-width="2.5" stroke-linecap="round"/>
<path d="M1.3,10.2V8.2a4.3,4.3 0 0 1 4.3,-4.3H21.4a4.3,4.3 0 0 1 4.3,4.3v2z" fill="#858585"/>
<rect x="6.2" y="1" width="4" height="6.4" rx="2" fill="#fff" stroke="#858585" stroke-width="1.9"/><rect x="16.8" y="1" width="4" height="6.4" rx="2" fill="#fff" stroke="#858585" stroke-width="1.9"/>
<path d="M22.2,16.6V27M17,21.8H27.4" stroke="#858585" stroke-width="2.5" stroke-linecap="round"/></g>
<g transform="translate(2150.40,774.20)"><path d="M13.6,25.2H5.6a4.3,4.3 0 0 1 -4.3,-4.3V8.2a4.3,4.3 0 0 1 4.3,-4.3H21.4a4.3,4.3 0 0 1 4.3,4.3V13.4" fill="none" stroke="#858585" stroke-width="2.5" stroke-linecap="round"/>
<path d="M1.3,10.2V8.2a4.3,4.3 0 0 1 4.3,-4.3H21.4a4.3,4.3 0 0 1 4.3,4.3v2z" fill="#858585"/>
<rect x="6.2" y="1" width="4" height="6.4" rx="2" fill="#fff" stroke="#858585" stroke-width="1.9"/><rect x="16.8" y="1" width="4" height="6.4" rx="2" fill="#fff" stroke="#858585" stroke-width="1.9"/>
<path d="M22.2,16.6V27M17,21.8H27.4" stroke="#858585" stroke-width="2.5" stroke-linecap="round"/></g>
<g transform="translate(2409.50,787.80)"><circle cx="0" cy="0" r="12.4" fill="none" stroke="#848484" stroke-width="3.1" stroke-dasharray="4.6 3.19" stroke-dashoffset="2.3"/></g>
<g transform="translate(283.60,845.90) scale(1.03)"><path d="M1.2,20.6H24.8" stroke="#858585" stroke-width="2.7" stroke-linecap="round" fill="none"/>
<path d="M2.2,5.8L4.6,5.1a1,1 0 0 1 1,0.3L8,8.2L18.2,2.4C20.4,1.2 23.4,1.2 24.6,2.6C25.4,3.8 24,5.6 21.8,6.6L17,8.8L15.4,14.6a1.2,1.2 0 0 1 -0.8,0.8L12.6,16a0.5,0.5 0 0 1 -0.6,-0.6L12.6,10.8L7.6,13C6,13.6 4.6,13 4,11.6Z" fill="#858585" stroke="#858585" stroke-width="0.8" stroke-linejoin="round"/></g>
<g transform="translate(998.00,845.80)"><path d="M1.2,1.3H22.8M1.2,22.7H22.8" stroke="#858585" stroke-width="2.5" stroke-linecap="round" fill="none"/>
<path d="M4.6,1.5C4.6,8 10,9.2 10,12C10,14.8 4.6,16 4.6,22.5M19.4,1.5C19.4,8 14,9.2 14,12C14,14.8 19.4,16 19.4,22.5" stroke="#858585" stroke-width="2.5" fill="none"/></g>
<g transform="translate(1250.10,857.90)"><circle cx="0" cy="0" r="15.8" fill="#b6b6b6"/><path d="M-3.9,-5.6L5.8,0L-3.9,5.6Z" fill="#fff" stroke="#fff" stroke-width="2.4" stroke-linejoin="round"/></g>
<g transform="translate(1511.40,844.40)"><circle cx="12.2" cy="8.2" r="6.9" fill="none" stroke="#858585" stroke-width="2.15"/>
<path d="M7,13.6C3.6,16 1.4,19.4 1.3,22.6a2.4,2.4 0 0 0 2.4,2.5H12.4" fill="none" stroke="#858585" stroke-width="2.15" stroke-linecap="round"/>
<path d="M20.6,16.4V26.2M15.7,21.3H25.5" stroke="#858585" stroke-width="2.15" stroke-linecap="round"/></g>
<g transform="translate(1738.40,844.40)"><path d="M1.6,1.4L1.3,25.6" stroke="#3b5edb" stroke-width="2.7" stroke-linecap="round"/>
<path d="M1.6,1.6C7,-0.2 14,3.4 21.8,1.2a0.6,0.6 0 0 1 0.7,0.8L19.4,9.2L22.6,16.2a0.6,0.6 0 0 1 -0.4,0.8C14,19.4 7.4,15.6 1.5,17.6Z" fill="#3b5edb"/></g>
<g transform="translate(1950.40,844.20)"><path d="M13.6,25.2H5.6a4.3,4.3 0 0 1 -4.3,-4.3V8.2a4.3,4.3 0 0 1 4.3,-4.3H21.4a4.3,4.3 0 0 1 4.3,4.3V13.4" fill="none" stroke="#858585" stroke-width="2.5" stroke-linecap="round"/>
<path d="M1.3,10.2V8.2a4.3,4.3 0 0 1 4.3,-4.3H21.4a4.3,4.3 0 0 1 4.3,4.3v2z" fill="#858585"/>
<rect x="6.2" y="1" width="4" height="6.4" rx="2" fill="#fff" stroke="#858585" stroke-width="1.9"/><rect x="16.8" y="1" width="4" height="6.4" rx="2" fill="#fff" stroke="#858585" stroke-width="1.9"/>
<path d="M22.2,16.6V27M17,21.8H27.4" stroke="#858585" stroke-width="2.5" stroke-linecap="round"/></g>
<g transform="translate(2150.40,844.20)"><path d="M13.6,25.2H5.6a4.3,4.3 0 0 1 -4.3,-4.3V8.2a4.3,4.3 0 0 1 4.3,-4.3H21.4a4.3,4.3 0 0 1 4.3,4.3V13.4" fill="none" stroke="#858585" stroke-width="2.5" stroke-linecap="round"/>
<path d="M1.3,10.2V8.2a4.3,4.3 0 0 1 4.3,-4.3H21.4a4.3,4.3 0 0 1 4.3,4.3v2z" fill="#858585"/>
<rect x="6.2" y="1" width="4" height="6.4" rx="2" fill="#fff" stroke="#858585" stroke-width="1.9"/><rect x="16.8" y="1" width="4" height="6.4" rx="2" fill="#fff" stroke="#858585" stroke-width="1.9"/>
<path d="M22.2,16.6V27M17,21.8H27.4" stroke="#858585" stroke-width="2.5" stroke-linecap="round"/></g>
<g transform="translate(2409.50,857.80)"><circle cx="0" cy="0" r="12.4" fill="none" stroke="#848484" stroke-width="3.1" stroke-dasharray="4.6 3.19" stroke-dashoffset="2.3"/></g>
<g transform="translate(286.60,918.20)"><path d="M9.9,0V19.8M0,9.9H19.8" stroke="#808080" stroke-width="2.0" stroke-linecap="round"/></g>
<g transform="translate(175.40,1020.50)"><path d="M1.6,1.4H15.6L8.6,9.8Z" fill="#7a7a7a" stroke="#7a7a7a" stroke-width="2.4" stroke-linejoin="round"/></g>
<g transform="translate(464.00,1026.40)"><circle cx="2.6" cy="0" r="2.15" fill="#858585"/><circle cx="12.6" cy="0" r="2.15" fill="#858585"/><circle cx="22.6" cy="0" r="2.15" fill="#858585"/></g>
<g transform="translate(513.90,1016.20)"><path d="M10.3,0V20.6M0,10.3H20.6" stroke="#808080" stroke-width="2.1" stroke-linecap="round"/></g>
<g transform="translate(283.60,1146.10) scale(1.03)"><path d="M1.2,20.6H24.8" stroke="#fbbf30" stroke-width="2.7" stroke-linecap="round" fill="none"/>
<path d="M2.2,5.8L4.6,5.1a1,1 0 0 1 1,0.3L8,8.2L18.2,2.4C20.4,1.2 23.4,1.2 24.6,2.6C25.4,3.8 24,5.6 21.8,6.6L17,8.8L15.4,14.6a1.2,1.2 0 0 1 -0.8,0.8L12.6,16a0.5,0.5 0 0 1 -0.6,-0.6L12.6,10.8L7.6,13C6,13.6 4.6,13 4,11.6Z" fill="#fbbf30" stroke="#fbbf30" stroke-width="0.8" stroke-linejoin="round"/></g>
<g transform="translate(998.00,1146.00)"><path d="M1.2,1.3H22.8M1.2,22.7H22.8" stroke="#858585" stroke-width="2.5" stroke-linecap="round" fill="none"/>
<path d="M4.6,1.5C4.6,8 10,9.2 10,12C10,14.8 4.6,16 4.6,22.5M19.4,1.5C19.4,8 14,9.2 14,12C14,14.8 19.4,16 19.4,22.5" stroke="#858585" stroke-width="2.5" fill="none"/></g>
<g transform="translate(1250.10,1158.10)"><circle cx="0" cy="0" r="15.8" fill="#b6b6b6"/><path d="M-3.9,-5.6L5.8,0L-3.9,5.6Z" fill="#fff" stroke="#fff" stroke-width="2.4" stroke-linejoin="round"/></g>
<g transform="translate(1511.40,1144.60)"><circle cx="12.2" cy="8.2" r="6.9" fill="none" stroke="#858585" stroke-width="2.15"/>
<path d="M7,13.6C3.6,16 1.4,19.4 1.3,22.6a2.4,2.4 0 0 0 2.4,2.5H12.4" fill="none" stroke="#858585" stroke-width="2.15" stroke-linecap="round"/>
<path d="M20.6,16.4V26.2M15.7,21.3H25.5" stroke="#858585" stroke-width="2.15" stroke-linecap="round"/></g>
<g transform="translate(1738.40,1144.60)"><path d="M1.6,1.4L1.3,25.6" stroke="#3b5edb" stroke-width="2.7" stroke-linecap="round"/>
<path d="M1.6,1.6C7,-0.2 14,3.4 21.8,1.2a0.6,0.6 0 0 1 0.7,0.8L19.4,9.2L22.6,16.2a0.6,0.6 0 0 1 -0.4,0.8C14,19.4 7.4,15.6 1.5,17.6Z" fill="#3b5edb"/></g>
<g transform="translate(1950.40,1144.40)"><path d="M13.6,25.2H5.6a4.3,4.3 0 0 1 -4.3,-4.3V8.2a4.3,4.3 0 0 1 4.3,-4.3H21.4a4.3,4.3 0 0 1 4.3,4.3V13.4" fill="none" stroke="#858585" stroke-width="2.5" stroke-linecap="round"/>
<path d="M1.3,10.2V8.2a4.3,4.3 0 0 1 4.3,-4.3H21.4a4.3,4.3 0 0 1 4.3,4.3v2z" fill="#858585"/>
<rect x="6.2" y="1" width="4" height="6.4" rx="2" fill="#fff" stroke="#858585" stroke-width="1.9"/><rect x="16.8" y="1" width="4" height="6.4" rx="2" fill="#fff" stroke="#858585" stroke-width="1.9"/>
<path d="M22.2,16.6V27M17,21.8H27.4" stroke="#858585" stroke-width="2.5" stroke-linecap="round"/></g>
<g transform="translate(2150.40,1144.40)"><path d="M13.6,25.2H5.6a4.3,4.3 0 0 1 -4.3,-4.3V8.2a4.3,4.3 0 0 1 4.3,-4.3H21.4a4.3,4.3 0 0 1 4.3,4.3V13.4" fill="none" stroke="#858585" stroke-width="2.5" stroke-linecap="round"/>
<path d="M1.3,10.2V8.2a4.3,4.3 0 0 1 4.3,-4.3H21.4a4.3,4.3 0 0 1 4.3,4.3v2z" fill="#858585"/>
<rect x="6.2" y="1" width="4" height="6.4" rx="2" fill="#fff" stroke="#858585" stroke-width="1.9"/><rect x="16.8" y="1" width="4" height="6.4" rx="2" fill="#fff" stroke="#858585" stroke-width="1.9"/>
<path d="M22.2,16.6V27M17,21.8H27.4" stroke="#858585" stroke-width="2.5" stroke-linecap="round"/></g>
<g transform="translate(2409.40,1158.00)"><circle cx="0" cy="0" r="12.2" fill="none" stroke="#3a2500" stroke-width="2.8"/><path d="M0.8,-7.4L0.8,2.2L7.8,-3.4A8.4,8.4 0 0 0 0.8,-7.4Z" fill="#3a2500"/></g>
<g transform="translate(283.60,1216.10) scale(1.03)"><path d="M1.2,20.6H24.8" stroke="#858585" stroke-width="2.7" stroke-linecap="round" fill="none"/>
<path d="M2.2,5.8L4.6,5.1a1,1 0 0 1 1,0.3L8,8.2L18.2,2.4C20.4,1.2 23.4,1.2 24.6,2.6C25.4,3.8 24,5.6 21.8,6.6L17,8.8L15.4,14.6a1.2,1.2 0 0 1 -0.8,0.8L12.6,16a0.5,0.5 0 0 1 -0.6,-0.6L12.6,10.8L7.6,13C6,13.6 4.6,13 4,11.6Z" fill="#858585" stroke="#858585" stroke-width="0.8" stroke-linejoin="round"/></g>
<g transform="translate(998.00,1216.00)"><path d="M1.2,1.3H22.8M1.2,22.7H22.8" stroke="#858585" stroke-width="2.5" stroke-linecap="round" fill="none"/>
<path d="M4.6,1.5C4.6,8 10,9.2 10,12C10,14.8 4.6,16 4.6,22.5M19.4,1.5C19.4,8 14,9.2 14,12C14,14.8 19.4,16 19.4,22.5" stroke="#858585" stroke-width="2.5" fill="none"/></g>
<g transform="translate(1250.10,1228.10)"><circle cx="0" cy="0" r="15.8" fill="#b6b6b6"/><path d="M-3.9,-5.6L5.8,0L-3.9,5.6Z" fill="#fff" stroke="#fff" stroke-width="2.4" stroke-linejoin="round"/></g>
<g transform="translate(1511.40,1214.60)"><circle cx="12.2" cy="8.2" r="6.9" fill="none" stroke="#858585" stroke-width="2.15"/>
<path d="M7,13.6C3.6,16 1.4,19.4 1.3,22.6a2.4,2.4 0 0 0 2.4,2.5H12.4" fill="none" stroke="#858585" stroke-width="2.15" stroke-linecap="round"/>
<path d="M20.6,16.4V26.2M15.7,21.3H25.5" stroke="#858585" stroke-width="2.15" stroke-linecap="round"/></g>
<g transform="translate(1738.40,1214.60)"><path d="M1.6,1.4L1.3,25.6" stroke="#3b5edb" stroke-width="2.7" stroke-linecap="round"/>
<path d="M1.6,1.6C7,-0.2 14,3.4 21.8,1.2a0.6,0.6 0 0 1 0.7,0.8L19.4,9.2L22.6,16.2a0.6,0.6 0 0 1 -0.4,0.8C14,19.4 7.4,15.6 1.5,17.6Z" fill="#3b5edb"/></g>
<g transform="translate(1950.40,1214.40)"><path d="M13.6,25.2H5.6a4.3,4.3 0 0 1 -4.3,-4.3V8.2a4.3,4.3 0 0 1 4.3,-4.3H21.4a4.3,4.3 0 0 1 4.3,4.3V13.4" fill="none" stroke="#858585" stroke-width="2.5" stroke-linecap="round"/>
<path d="M1.3,10.2V8.2a4.3,4.3 0 0 1 4.3,-4.3H21.4a4.3,4.3 0 0 1 4.3,4.3v2z" fill="#858585"/>
<rect x="6.2" y="1" width="4" height="6.4" rx="2" fill="#fff" stroke="#858585" stroke-width="1.9"/><rect x="16.8" y="1" width="4" height="6.4" rx="2" fill="#fff" stroke="#858585" stroke-width="1.9"/>
<path d="M22.2,16.6V27M17,21.8H27.4" stroke="#858585" stroke-width="2.5" stroke-linecap="round"/></g>
<g transform="translate(2150.40,1214.40)"><path d="M13.6,25.2H5.6a4.3,4.3 0 0 1 -4.3,-4.3V8.2a4.3,4.3 0 0 1 4.3,-4.3H21.4a4.3,4.3 0 0 1 4.3,4.3V13.4" fill="none" stroke="#858585" stroke-width="2.5" stroke-linecap="round"/>
<path d="M1.3,10.2V8.2a4.3,4.3 0 0 1 4.3,-4.3H21.4a4.3,4.3 0 0 1 4.3,4.3v2z" fill="#858585"/>
<rect x="6.2" y="1" width="4" height="6.4" rx="2" fill="#fff" stroke="#858585" stroke-width="1.9"/><rect x="16.8" y="1" width="4" height="6.4" rx="2" fill="#fff" stroke="#858585" stroke-width="1.9"/>
<path d="M22.2,16.6V27M17,21.8H27.4" stroke="#858585" stroke-width="2.5" stroke-linecap="round"/></g>
<g transform="translate(2409.50,1228.00)"><circle cx="0" cy="0" r="12.4" fill="none" stroke="#848484" stroke-width="3.1" stroke-dasharray="4.6 3.19" stroke-dashoffset="2.3"/></g>
<g transform="translate(283.60,1286.10) scale(1.03)"><path d="M1.2,20.6H24.8" stroke="#858585" stroke-width="2.7" stroke-linecap="round" fill="none"/>
<path d="M2.2,5.8L4.6,5.1a1,1 0 0 1 1,0.3L8,8.2L18.2,2.4C20.4,1.2 23.4,1.2 24.6,2.6C25.4,3.8 24,5.6 21.8,6.6L17,8.8L15.4,14.6a1.2,1.2 0 0 1 -0.8,0.8L12.6,16a0.5,0.5 0 0 1 -0.6,-0.6L12.6,10.8L7.6,13C6,13.6 4.6,13 4,11.6Z" fill="#858585" stroke="#858585" stroke-width="0.8" stroke-linejoin="round"/></g>
<g transform="translate(998.00,1286.00)"><path d="M1.2,1.3H22.8M1.2,22.7H22.8" stroke="#858585" stroke-width="2.5" stroke-linecap="round" fill="none"/>
<path d="M4.6,1.5C4.6,8 10,9.2 10,12C10,14.8 4.6,16 4.6,22.5M19.4,1.5C19.4,8 14,9.2 14,12C14,14.8 19.4,16 19.4,22.5" stroke="#858585" stroke-width="2.5" fill="none"/></g>
<g transform="translate(1250.10,1298.10)"><circle cx="0" cy="0" r="15.8" fill="#b6b6b6"/><path d="M-3.9,-5.6L5.8,0L-3.9,5.6Z" fill="#fff" stroke="#fff" stroke-width="2.4" stroke-linejoin="round"/></g>
<g transform="translate(1511.40,1284.60)"><circle cx="12.2" cy="8.2" r="6.9" fill="none" stroke="#858585" stroke-width="2.15"/>
<path d="M7,13.6C3.6,16 1.4,19.4 1.3,22.6a2.4,2.4 0 0 0 2.4,2.5H12.4" fill="none" stroke="#858585" stroke-width="2.15" stroke-linecap="round"/>
<path d="M20.6,16.4V26.2M15.7,21.3H25.5" stroke="#858585" stroke-width="2.15" stroke-linecap="round"/></g>
<g transform="translate(1738.40,1284.60)"><path d="M1.6,1.4L1.3,25.6" stroke="#3b5edb" stroke-width="2.7" stroke-linecap="round"/>
<path d="M1.6,1.6C7,-0.2 14,3.4 21.8,1.2a0.6,0.6 0 0 1 0.7,0.8L19.4,9.2L22.6,16.2a0.6,0.6 0 0 1 -0.4,0.8C14,19.4 7.4,15.6 1.5,17.6Z" fill="#3b5edb"/></g>
<g transform="translate(1950.40,1284.40)"><path d="M13.6,25.2H5.6a4.3,4.3 0 0 1 -4.3,-4.3V8.2a4.3,4.3 0 0 1 4.3,-4.3H21.4a4.3,4.3 0 0 1 4.3,4.3V13.4" fill="none" stroke="#858585" stroke-width="2.5" stroke-linecap="round"/>
<path d="M1.3,10.2V8.2a4.3,4.3 0 0 1 4.3,-4.3H21.4a4.3,4.3 0 0 1 4.3,4.3v2z" fill="#858585"/>
<rect x="6.2" y="1" width="4" height="6.4" rx="2" fill="#fff" stroke="#858585" stroke-width="1.9"/><rect x="16.8" y="1" width="4" height="6.4" rx="2" fill="#fff" stroke="#858585" stroke-width="1.9"/>
<path d="M22.2,16.6V27M17,21.8H27.4" stroke="#858585" stroke-width="2.5" stroke-linecap="round"/></g>
<g transform="translate(2150.40,1284.40)"><path d="M13.6,25.2H5.6a4.3,4.3 0 0 1 -4.3,-4.3V8.2a4.3,4.3 0 0 1 4.3,-4.3H21.4a4.3,4.3 0 0 1 4.3,4.3V13.4" fill="none" stroke="#858585" stroke-width="2.5" stroke-linecap="round"/>
<path d="M1.3,10.2V8.2a4.3,4.3 0 0 1 4.3,-4.3H21.4a4.3,4.3 0 0 1 4.3,4.3v2z" fill="#858585"/>
<rect x="6.2" y="1" width="4" height="6.4" rx="2" fill="#fff" stroke="#858585" stroke-width="1.9"/><rect x="16.8" y="1" width="4" height="6.4" rx="2" fill="#fff" stroke="#858585" stroke-width="1.9"/>
<path d="M22.2,16.6V27M17,21.8H27.4" stroke="#858585" stroke-width="2.5" stroke-linecap="round"/></g>
<g transform="translate(2409.50,1298.00)"><circle cx="0" cy="0" r="12.4" fill="none" stroke="#848484" stroke-width="3.1" stroke-dasharray="4.6 3.19" stroke-dashoffset="2.3"/></g>
<g transform="translate(286.60,1358.40)"><path d="M9.9,0V19.8M0,9.9H19.8" stroke="#808080" stroke-width="2.0" stroke-linecap="round"/></g>
<g transform="translate(175.40,1459.90)"><path d="M1.6,1.4H15.6L8.6,9.8Z" fill="#7a7a7a" stroke="#7a7a7a" stroke-width="2.4" stroke-linejoin="round"/></g>
<g transform="translate(453.10,1465.80)"><circle cx="2.6" cy="0" r="2.15" fill="#858585"/><circle cx="12.6" cy="0" r="2.15" fill="#858585"/><circle cx="22.6" cy="0" r="2.15" fill="#858585"/></g>
<g transform="translate(503.00,1455.60)"><path d="M10.3,0V20.6M0,10.3H20.6" stroke="#808080" stroke-width="2.1" stroke-linecap="round"/></g>
<g transform="translate(283.60,1585.50) scale(1.03)"><path d="M1.2,20.6H24.8" stroke="#858585" stroke-width="2.7" stroke-linecap="round" fill="none"/>
<path d="M2.2,5.8L4.6,5.1a1,1 0 0 1 1,0.3L8,8.2L18.2,2.4C20.4,1.2 23.4,1.2 24.6,2.6C25.4,3.8 24,5.6 21.8,6.6L17,8.8L15.4,14.6a1.2,1.2 0 0 1 -0.8,0.8L12.6,16a0.5,0.5 0 0 1 -0.6,-0.6L12.6,10.8L7.6,13C6,13.6 4.6,13 4,11.6Z" fill="#858585" stroke="#858585" stroke-width="0.8" stroke-linejoin="round"/></g>
<g transform="translate(998.00,1585.40)"><path d="M1.2,1.3H22.8M1.2,22.7H22.8" stroke="#858585" stroke-width="2.5" stroke-linecap="round" fill="none"/>
<path d="M4.6,1.5C4.6,8 10,9.2 10,12C10,14.8 4.6,16 4.6,22.5M19.4,1.5C19.4,8 14,9.2 14,12C14,14.8 19.4,16 19.4,22.5" stroke="#858585" stroke-width="2.5" fill="none"/></g>
<g transform="translate(1250.10,1597.50)"><circle cx="0" cy="0" r="15.8" fill="#b6b6b6"/><path d="M-3.9,-5.6L5.8,0L-3.9,5.6Z" fill="#fff" stroke="#fff" stroke-width="2.4" stroke-linejoin="round"/></g>
<g transform="translate(1511.40,1584.00)"><circle cx="12.2" cy="8.2" r="6.9" fill="none" stroke="#858585" stroke-width="2.15"/>
<path d="M7,13.6C3.6,16 1.4,19.4 1.3,22.6a2.4,2.4 0 0 0 2.4,2.5H12.4" fill="none" stroke="#858585" stroke-width="2.15" stroke-linecap="round"/>
<path d="M20.6,16.4V26.2M15.7,21.3H25.5" stroke="#858585" stroke-width="2.15" stroke-linecap="round"/></g>
<g transform="translate(1738.40,1584.00)"><path d="M1.6,1.4L1.3,25.6" stroke="#3b5edb" stroke-width="2.7" stroke-linecap="round"/>
<path d="M1.6,1.6C7,-0.2 14,3.4 21.8,1.2a0.6,0.6 0 0 1 0.7,0.8L19.4,9.2L22.6,16.2a0.6,0.6 0 0 1 -0.4,0.8C14,19.4 7.4,15.6 1.5,17.6Z" fill="#3b5edb"/></g>
<g transform="translate(1950.40,1583.80)"><path d="M13.6,25.2H5.6a4.3,4.3 0 0 1 -4.3,-4.3V8.2a4.3,4.3 0 0 1 4.3,-4.3H21.4a4.3,4.3 0 0 1 4.3,4.3V13.4" fill="none" stroke="#858585" stroke-width="2.5" stroke-linecap="round"/>
<path d="M1.3,10.2V8.2a4.3,4.3 0 0 1 4.3,-4.3H21.4a4.3,4.3 0 0 1 4.3,4.3v2z" fill="#858585"/>
<rect x="6.2" y="1" width="4" height="6.4" rx="2" fill="#fff" stroke="#858585" stroke-width="1.9"/><rect x="16.8" y="1" width="4" height="6.4" rx="2" fill="#fff" stroke="#858585" stroke-width="1.9"/>
<path d="M22.2,16.6V27M17,21.8H27.4" stroke="#858585" stroke-width="2.5" stroke-linecap="round"/></g>
<g transform="translate(2150.40,1583.80)"><path d="M13.6,25.2H5.6a4.3,4.3 0 0 1 -4.3,-4.3V8.2a4.3,4.3 0 0 1 4.3,-4.3H21.4a4.3,4.3 0 0 1 4.3,4.3V13.4" fill="none" stroke="#858585" stroke-width="2.5" stroke-linecap="round"/>
<path d="M1.3,10.2V8.2a4.3,4.3 0 0 1 4.3,-4.3H21.4a4.3,4.3 0 0 1 4.3,4.3v2z" fill="#858585"/>
<rect x="6.2" y="1" width="4" height="6.4" rx="2" fill="#fff" stroke="#858585" stroke-width="1.9"/><rect x="16.8" y="1" width="4" height="6.4" rx="2" fill="#fff" stroke="#858585" stroke-width="1.9"/>
<path d="M22.2,16.6V27M17,21.8H27.4" stroke="#858585" stroke-width="2.5" stroke-linecap="round"/></g>
<g transform="translate(2409.50,1597.40)"><circle cx="0" cy="0" r="12.4" fill="none" stroke="#848484" stroke-width="3.1" stroke-dasharray="4.6 3.19" stroke-dashoffset="2.3"/></g>
<g transform="translate(283.60,1655.50) scale(1.03)"><path d="M1.2,20.6H24.8" stroke="#858585" stroke-width="2.7" stroke-linecap="round" fill="none"/>
<path d="M2.2,5.8L4.6,5.1a1,1 0 0 1 1,0.3L8,8.2L18.2,2.4C20.4,1.2 23.4,1.2 24.6,2.6C25.4,3.8 24,5.6 21.8,6.6L17,8.8L15.4,14.6a1.2,1.2 0 0 1 -0.8,0.8L12.6,16a0.5,0.5 0 0 1 -0.6,-0.6L12.6,10.8L7.6,13C6,13.6 4.6,13 4,11.6Z" fill="#858585" stroke="#858585" stroke-width="0.8" stroke-linejoin="round"/></g>
<g transform="translate(998.00,1655.40)"><path d="M1.2,1.3H22.8M1.2,22.7H22.8" stroke="#858585" stroke-width="2.5" stroke-linecap="round" fill="none"/>
<path d="M4.6,1.5C4.6,8 10,9.2 10,12C10,14.8 4.6,16 4.6,22.5M19.4,1.5C19.4,8 14,9.2 14,12C14,14.8 19.4,16 19.4,22.5" stroke="#858585" stroke-width="2.5" fill="none"/></g>
<g transform="translate(1250.10,1667.50)"><circle cx="0" cy="0" r="15.8" fill="#b6b6b6"/><path d="M-3.9,-5.6L5.8,0L-3.9,5.6Z" fill="#fff" stroke="#fff" stroke-width="2.4" stroke-linejoin="round"/></g>
<g transform="translate(1511.40,1654.00)"><circle cx="12.2" cy="8.2" r="6.9" fill="none" stroke="#858585" stroke-width="2.15"/>
<path d="M7,13.6C3.6,16 1.4,19.4 1.3,22.6a2.4,2.4 0 0 0 2.4,2.5H12.4" fill="none" stroke="#858585" stroke-width="2.15" stroke-linecap="round"/>
<path d="M20.6,16.4V26.2M15.7,21.3H25.5" stroke="#858585" stroke-width="2.15" stroke-linecap="round"/></g>
<g transform="translate(1738.40,1654.00)"><path d="M1.6,1.4L1.3,25.6" stroke="#3b5edb" stroke-width="2.7" stroke-linecap="round"/>
<path d="M1.6,1.6C7,-0.2 14,3.4 21.8,1.2a0.6,0.6 0 0 1 0.7,0.8L19.4,9.2L22.6,16.2a0.6,0.6 0 0 1 -0.4,0.8C14,19.4 7.4,15.6 1.5,17.6Z" fill="#3b5edb"/></g>
<g transform="translate(1950.40,1653.80)"><path d="M13.6,25.2H5.6a4.3,4.3 0 0 1 -4.3,-4.3V8.2a4.3,4.3 0 0 1 4.3,-4.3H21.4a4.3,4.3 0 0 1 4.3,4.3V13.4" fill="none" stroke="#858585" stroke-width="2.5" stroke-linecap="round"/>
<path d="M1.3,10.2V8.2a4.3,4.3 0 0 1 4.3,-4.3H21.4a4.3,4.3 0 0 1 4.3,4.3v2z" fill="#858585"/>
<rect x="6.2" y="1" width="4" height="6.4" rx="2" fill="#fff" stroke="#858585" stroke-width="1.9"/><rect x="16.8" y="1" width="4" height="6.4" rx="2" fill="#fff" stroke="#858585" stroke-width="1.9"/>
<path d="M22.2,16.6V27M17,21.8H27.4" stroke="#858585" stroke-width="2.5" stroke-linecap="round"/></g>
<g transform="translate(2150.40,1653.80)"><path d="M13.6,25.2H5.6a4.3,4.3 0 0 1 -4.3,-4.3V8.2a4.3,4.3 0 0 1 4.3,-4.3H21.4a4.3,4.3 0 0 1 4.3,4.3V13.4" fill="none" stroke="#858585" stroke-width="2.5" stroke-linecap="round"/>
<path d="M1.3,10.2V8.2a4.3,4.3 0 0 1 4.3,-4.3H21.4a4.3,4.3 0 0 1 4.3,4.3v2z" fill="#858585"/>
<rect x="6.2" y="1" width="4" height="6.4" rx="2" fill="#fff" stroke="#858585" stroke-width="1.9"/><rect x="16.8" y="1" width="4" height="6.4" rx="2" fill="#fff" stroke="#858585" stroke-width="1.9"/>
<path d="M22.2,16.6V27M17,21.8H27.4" stroke="#858585" stroke-width="2.5" stroke-linecap="round"/></g>
<g transform="translate(2409.50,1667.40)"><circle cx="0" cy="0" r="12.4" fill="none" stroke="#848484" stroke-width="3.1" stroke-dasharray="4.6 3.19" stroke-dashoffset="2.3"/></g>
<g transform="translate(283.60,1725.50) scale(1.03)"><path d="M1.2,20.6H24.8" stroke="#858585" stroke-width="2.7" stroke-linecap="round" fill="none"/>
<path d="M2.2,5.8L4.6,5.1a1,1 0 0 1 1,0.3L8,8.2L18.2,2.4C20.4,1.2 23.4,1.2 24.6,2.6C25.4,3.8 24,5.6 21.8,6.6L17,8.8L15.4,14.6a1.2,1.2 0 0 1 -0.8,0.8L12.6,16a0.5,0.5 0 0 1 -0.6,-0.6L12.6,10.8L7.6,13C6,13.6 4.6,13 4,11.6Z" fill="#858585" stroke="#858585" stroke-width="0.8" stroke-linejoin="round"/></g>
<g transform="translate(998.00,1725.40)"><path d="M1.2,1.3H22.8M1.2,22.7H22.8" stroke="#858585" stroke-width="2.5" stroke-linecap="round" fill="none"/>
<path d="M4.6,1.5C4.6,8 10,9.2 10,12C10,14.8 4.6,16 4.6,22.5M19.4,1.5C19.4,8 14,9.2 14,12C14,14.8 19.4,16 19.4,22.5" stroke="#858585" stroke-width="2.5" fill="none"/></g>
<g transform="translate(1250.10,1737.50)"><circle cx="0" cy="0" r="15.8" fill="#b6b6b6"/><path d="M-3.9,-5.6L5.8,0L-3.9,5.6Z" fill="#fff" stroke="#fff" stroke-width="2.4" stroke-linejoin="round"/></g>
<g transform="translate(1511.40,1724.00)"><circle cx="12.2" cy="8.2" r="6.9" fill="none" stroke="#858585" stroke-width="2.15"/>
<path d="M7,13.6C3.6,16 1.4,19.4 1.3,22.6a2.4,2.4 0 0 0 2.4,2.5H12.4" fill="none" stroke="#858585" stroke-width="2.15" stroke-linecap="round"/>
<path d="M20.6,16.4V26.2M15.7,21.3H25.5" stroke="#858585" stroke-width="2.15" stroke-linecap="round"/></g>
<g transform="translate(1738.40,1724.00)"><path d="M1.6,1.4L1.3,25.6" stroke="#3b5edb" stroke-width="2.7" stroke-linecap="round"/>
<path d="M1.6,1.6C7,-0.2 14,3.4 21.8,1.2a0.6,0.6 0 0 1 0.7,0.8L19.4,9.2L22.6,16.2a0.6,0.6 0 0 1 -0.4,0.8C14,19.4 7.4,15.6 1.5,17.6Z" fill="#3b5edb"/></g>
<g transform="translate(1950.40,1723.80)"><path d="M13.6,25.2H5.6a4.3,4.3 0 0 1 -4.3,-4.3V8.2a4.3,4.3 0 0 1 4.3,-4.3H21.4a4.3,4.3 0 0 1 4.3,4.3V13.4" fill="none" stroke="#858585" stroke-width="2.5" stroke-linecap="round"/>
<path d="M1.3,10.2V8.2a4.3,4.3 0 0 1 4.3,-4.3H21.4a4.3,4.3 0 0 1 4.3,4.3v2z" fill="#858585"/>
<rect x="6.2" y="1" width="4" height="6.4" rx="2" fill="#fff" stroke="#858585" stroke-width="1.9"/><rect x="16.8" y="1" width="4" height="6.4" rx="2" fill="#fff" stroke="#858585" stroke-width="1.9"/>
<path d="M22.2,16.6V27M17,21.8H27.4" stroke="#858585" stroke-width="2.5" stroke-linecap="round"/></g>
<g transform="translate(2150.40,1723.80)"><path d="M13.6,25.2H5.6a4.3,4.3 0 0 1 -4.3,-4.3V8.2a4.3,4.3 0 0 1 4.3,-4.3H21.4a4.3,4.3 0 0 1 4.3,4.3V13.4" fill="none" stroke="#858585" stroke-width="2.5" stroke-linecap="round"/>
<path d="M1.3,10.2V8.2a4.3,4.3 0 0 1 4.3,-4.3H21.4a4.3,4.3 0 0 1 4.3,4.3v2z" fill="#858585"/>
<rect x="6.2" y="1" width="4" height="6.4" rx="2" fill="#fff" stroke="#858585" stroke-width="1.9"/><rect x="16.8" y="1" width="4" height="6.4" rx="2" fill="#fff" stroke="#858585" stroke-width="1.9"/>
<path d="M22.2,16.6V27M17,21.8H27.4" stroke="#858585" stroke-width="2.5" stroke-linecap="round"/></g>
<g transform="translate(2409.50,1737.40)"><circle cx="0" cy="0" r="12.4" fill="none" stroke="#848484" stroke-width="3.1" stroke-dasharray="4.6 3.19" stroke-dashoffset="2.3"/></g>
<g transform="translate(286.60,1797.80)"><path d="M9.9,0V19.8M0,9.9H19.8" stroke="#808080" stroke-width="2.0" stroke-linecap="round"/></g>
</svg>
<div class="tl">
<span class="t" style="font-size:30px;color:#1a1a1a;top:22.90px;-webkit-text-stroke:0.85px #1a1a1a;letter-spacing:0.046px;left:74.02px;">Alpha Build</span>
<span class="t" style="font-size:27.8px;color:#7e7e7e;top:25.07px;-webkit-text-stroke:0.2px #7e7e7e;letter-spacing:0.677px;left:1233.40px;">Search</span>
<span class="t" style="font-size:23.3px;color:#adadad;top:27.80px;left:1355.60px;">K</span>
<span class="t" style="font-size:21px;color:#fff;top:207.15px;font-weight:700;left:-310.94px;width:800px;text-align:center;">4</span>
<span class="t" style="font-size:18.8px;color:#fff;top:287.92px;font-weight:700;letter-spacing:0.533px;left:-338.02px;width:800px;text-align:center;text-indent:0.533px;transform:scaleX(1.1044);transform-origin:center;">Home</span>
<span class="t" style="font-size:18.8px;color:#fff;top:411.92px;font-weight:700;letter-spacing:0.126px;left:-337.45px;width:800px;text-align:center;text-indent:0.126px;transform:scaleX(1.0341);transform-origin:center;">Planner</span>
<span class="t" style="font-size:18.8px;color:#fff;top:535.72px;font-weight:700;letter-spacing:0.205px;left:-337.52px;width:800px;text-align:center;text-indent:0.205px;transform:scaleX(1.0446);transform-origin:center;">Teams</span>
<span class="t" style="font-size:18.8px;color:#fff;top:659.72px;font-weight:700;letter-spacing:0.247px;left:-338.02px;width:800px;text-align:center;text-indent:0.247px;transform:scaleX(1.0526);transform-origin:center;">Docs</span>
<span class="t" style="font-size:18.8px;color:#fff;top:783.72px;font-weight:700;letter-spacing:0.075px;left:-337.52px;width:800px;text-align:center;text-indent:0.075px;transform:scaleX(1.0203);transform-origin:center;">Clips</span>
<span class="t" style="font-size:18.8px;color:#fff;top:907.62px;font-weight:700;letter-spacing:0.184px;left:-337.91px;width:800px;text-align:center;text-indent:0.184px;transform:scaleX(1.0549);transform-origin:center;">Timeshe..</span>
<span class="t" style="font-size:18.8px;color:#fff;top:1031.52px;font-weight:700;letter-spacing:0.332px;left:-338.02px;width:800px;text-align:center;text-indent:0.332px;transform:scaleX(1.0738);transform-origin:center;">More</span>
<span class="t" style="font-size:18.8px;color:#fff;top:1781.32px;font-weight:700;letter-spacing:0.315px;left:-338.02px;width:800px;text-align:center;text-indent:0.315px;transform:scaleX(1.1102);transform-origin:center;">Invite</span>
<span class="t" style="font-size:17.6px;color:#fff;top:362.04px;font-weight:700;left:-337.69px;width:800px;text-align:center;">19</span>
<span class="t" style="font-size:27px;color:#666666;top:111.05px;-webkit-text-stroke:0.15px #666666;letter-spacing:1.067px;left:196.07px;">WDA Client Management</span>
<span class="t" style="font-size:27px;color:#666666;top:111.05px;-webkit-text-stroke:0.15px #666666;letter-spacing:1.408px;left:601.78px;">[Client Name]</span>
<span class="t" style="font-size:27px;color:#1c1c1c;top:111.05px;-webkit-text-stroke:0.9px #1c1c1c;letter-spacing:1.968px;left:852.25px;">Onboarding</span>
<span class="t" style="font-size:27.6px;color:#555555;top:111.24px;-webkit-text-stroke:0.2px #555555;letter-spacing:1.098px;left:2427.10px;">Agents</span>
<span class="t" style="font-size:27.6px;color:#555555;top:111.24px;-webkit-text-stroke:0.2px #555555;left:2578.70px;">4</span>
<span class="t" style="font-size:27.6px;color:#555555;top:111.24px;-webkit-text-stroke:0.2px #555555;letter-spacing:0.426px;left:2647.70px;">Ask AI</span>
<span class="t" style="font-size:27.6px;color:#555555;top:111.24px;-webkit-text-stroke:0.2px #555555;letter-spacing:0.503px;left:2815.10px;">Share</span>
<span class="t" style="font-size:23.9px;color:#8a8a8a;top:179.69px;-webkit-text-stroke:0.35px #8a8a8a;letter-spacing:0.782px;left:161.88px;">Add Channel</span>
<span class="t" style="font-size:23.9px;color:#1f1f1f;top:179.59px;-webkit-text-stroke:0.75px #1f1f1f;letter-spacing:1.043px;left:398.38px;">Data Centre</span>
<span class="t" style="font-size:23.9px;color:#5e5e5e;top:179.59px;-webkit-text-stroke:0.62px #5e5e5e;letter-spacing:1.426px;left:598.71px;">Kick-off Data Capture</span>
<span class="t" style="font-size:23.9px;color:#5e5e5e;top:179.59px;-webkit-text-stroke:0.62px #5e5e5e;letter-spacing:1.080px;left:916.81px;">Me Mode</span>
<span class="t" style="font-size:14.5px;color:#fff;top:187.28px;font-weight:700;letter-spacing:0.436px;left:659.27px;width:800px;text-align:center;text-indent:0.436px;">31</span>
<span class="t" style="font-size:23.9px;color:#5e5e5e;top:179.59px;-webkit-text-stroke:0.62px #5e5e5e;letter-spacing:1.161px;left:1084.11px;">Onboarding Calendar</span>
<span class="t" style="font-size:23.9px;color:#5e5e5e;top:179.59px;-webkit-text-stroke:0.62px #5e5e5e;letter-spacing:1.599px;left:1395.21px;">Kick-Off Form</span>
<span class="t" style="font-size:23.9px;color:#5e5e5e;top:179.59px;-webkit-text-stroke:0.62px #5e5e5e;letter-spacing:1.201px;left:1623.01px;">Archive</span>
<span class="t" style="font-size:23.9px;color:#5e5e5e;top:179.59px;-webkit-text-stroke:0.62px #5e5e5e;letter-spacing:0.427px;left:1800.71px;">View</span>
<span class="t" style="font-size:23.9px;color:#5748c9;top:256.98px;-webkit-text-stroke:0.35px #5748c9;letter-spacing:0.880px;left:198.58px;">Group: Onboarding Process</span>
<span class="t" style="font-size:23.9px;color:#7c7c7c;top:256.98px;-webkit-text-stroke:0.3px #7c7c7c;letter-spacing:0.997px;left:590.05px;">Subtasks</span>
<span class="t" style="font-size:23.9px;color:#7c7c7c;top:256.98px;-webkit-text-stroke:0.3px #7c7c7c;letter-spacing:0.930px;left:768.55px;">Columns</span>
<span class="t" style="font-size:23.9px;color:#7c7c7c;top:256.98px;-webkit-text-stroke:0.3px #7c7c7c;letter-spacing:1.113px;left:1999.15px;">Filter</span>
<span class="t" style="font-size:23.9px;color:#7c7c7c;top:256.98px;-webkit-text-stroke:0.3px #7c7c7c;letter-spacing:1.244px;left:2130.15px;">Closed</span>
<span class="t" style="font-size:23.9px;color:#7c7c7c;top:256.98px;-webkit-text-stroke:0.3px #7c7c7c;letter-spacing:0.729px;left:2283.15px;">Assignee</span>
<span class="t" style="font-size:23.9px;color:#2a2a2a;top:256.98px;-webkit-text-stroke:0.45px #2a2a2a;letter-spacing:1.086px;left:2595.53px;">Customize</span>
<span class="t" style="font-size:23.9px;color:#ffffff;top:256.88px;-webkit-text-stroke:0.45px #ffffff;letter-spacing:0.790px;left:2751.03px;">Add Task</span>
<span class="t" style="font-size:28.2px;color:#3b2985;top:341.83px;-webkit-text-stroke:0.5px #3b2985;letter-spacing:1.068px;left:237.65px;">Project Kick-off Form</span>
<span class="t" style="font-size:23.9px;color:#8a8a8a;top:344.48px;left:565.80px;">1</span>
<span class="t" style="font-size:23.9px;color:#8a8a8a;top:344.69px;-webkit-text-stroke:0.2px #8a8a8a;letter-spacing:0.640px;left:688.90px;">Add Task</span>
<span class="t" style="font-size:23.9px;color:#858585;top:409.08px;-webkit-text-stroke:0.25px #858585;letter-spacing:0.936px;left:232.43px;">Name</span>
<span class="t" style="font-size:23.9px;color:#858585;top:409.08px;-webkit-text-stroke:0.25px #858585;letter-spacing:0.992px;left:995.62px;">Time estimate</span>
<span class="t" style="font-size:23.9px;color:#858585;top:409.08px;-webkit-text-stroke:0.25px #858585;letter-spacing:1.150px;left:1253.83px;">Time tracked</span>
<span class="t" style="font-size:23.9px;color:#858585;top:409.08px;-webkit-text-stroke:0.25px #858585;letter-spacing:0.822px;left:1509.12px;">Assignee</span>
<span class="t" style="font-size:23.9px;color:#858585;top:409.08px;-webkit-text-stroke:0.25px #858585;letter-spacing:1.281px;left:1737.53px;">Priority</span>
<span class="t" style="font-size:23.9px;color:#858585;top:409.08px;-webkit-text-stroke:0.25px #858585;letter-spacing:1.228px;left:1947.53px;">Start date</span>
<span class="t" style="font-size:23.9px;color:#858585;top:409.08px;-webkit-text-stroke:0.25px #858585;letter-spacing:0.896px;left:2147.93px;">Due date</span>
<span class="t" style="font-size:23.9px;color:#858585;top:409.08px;-webkit-text-stroke:0.25px #858585;letter-spacing:1.233px;left:2383.43px;">Status</span>
<span class="t" style="font-size:23.9px;color:#858585;top:409.08px;-webkit-text-stroke:0.25px #858585;letter-spacing:0.288px;left:2735.53px;">Onboarding Process</span>
<span class="t" style="font-size:28.5px;color:#2a2a2a;top:473.37px;-webkit-text-stroke:0.42px #2a2a2a;letter-spacing:-0.024px;left:337.81px;">Jane Doe</span>
<span class="t" style="font-size:28.5px;color:#9c9c9c;top:473.37px;letter-spacing:0.226px;left:1275.60px;">Add time</span>
<span class="t" style="font-size:28.5px;color:#525252;top:473.37px;letter-spacing:0.497px;left:1781.50px;">Normal</span>
<span class="t" style="font-size:23.4px;color:#2a2a2a;top:477.31px;-webkit-text-stroke:0.45px #2a2a2a;letter-spacing:0.125px;left:2437.03px;">TO DO</span>
<span class="t" style="font-size:28.2px;color:#3b2985;top:473.13px;-webkit-text-stroke:0.5px #3b2985;letter-spacing:1.068px;left:2738.75px;">Project Kick-off Form</span>
<span class="t" style="font-size:28.5px;color:#767676;top:544.17px;letter-spacing:-0.283px;left:337.80px;">Add Task</span>
<span class="t" style="font-size:28.2px;color:#3a4248;top:641.83px;-webkit-text-stroke:0.5px #3a4248;letter-spacing:0.578px;left:238.65px;">Signatures &amp; Paperwork</span>
<span class="t" style="font-size:23.9px;color:#8a8a8a;top:644.48px;left:601.30px;">2</span>
<span class="t" style="font-size:23.9px;color:#8a8a8a;top:644.68px;-webkit-text-stroke:0.2px #8a8a8a;letter-spacing:0.640px;left:728.20px;">Add Task</span>
<span class="t" style="font-size:23.9px;color:#858585;top:709.09px;-webkit-text-stroke:0.25px #858585;letter-spacing:0.936px;left:232.43px;">Name</span>
<span class="t" style="font-size:23.9px;color:#858585;top:709.09px;-webkit-text-stroke:0.25px #858585;letter-spacing:0.992px;left:995.62px;">Time estimate</span>
<span class="t" style="font-size:23.9px;color:#858585;top:709.09px;-webkit-text-stroke:0.25px #858585;letter-spacing:1.150px;left:1253.83px;">Time tracked</span>
<span class="t" style="font-size:23.9px;color:#858585;top:709.09px;-webkit-text-stroke:0.25px #858585;letter-spacing:0.822px;left:1509.12px;">Assignee</span>
<span class="t" style="font-size:23.9px;color:#858585;top:709.09px;-webkit-text-stroke:0.25px #858585;letter-spacing:1.281px;left:1737.53px;">Priority</span>
<span class="t" style="font-size:23.9px;color:#858585;top:709.09px;-webkit-text-stroke:0.25px #858585;letter-spacing:1.228px;left:1947.53px;">Start date</span>
<span class="t" style="font-size:23.9px;color:#858585;top:709.09px;-webkit-text-stroke:0.25px #858585;letter-spacing:0.896px;left:2147.93px;">Due date</span>
<span class="t" style="font-size:23.9px;color:#858585;top:709.09px;-webkit-text-stroke:0.25px #858585;letter-spacing:1.233px;left:2383.43px;">Status</span>
<span class="t" style="font-size:23.9px;color:#858585;top:709.09px;-webkit-text-stroke:0.25px #858585;letter-spacing:0.288px;left:2735.53px;">Onboarding Process</span>
<span class="t" style="font-size:28.5px;color:#2a2a2a;top:773.38px;-webkit-text-stroke:0.42px #2a2a2a;letter-spacing:0.711px;left:336.81px;">Contract Signed</span>
<span class="t" style="font-size:28.5px;color:#9c9c9c;top:773.38px;letter-spacing:0.226px;left:1275.60px;">Add time</span>
<span class="t" style="font-size:28.5px;color:#525252;top:773.38px;letter-spacing:0.497px;left:1781.50px;">Normal</span>
<span class="t" style="font-size:23.4px;color:#2a2a2a;top:777.31px;-webkit-text-stroke:0.45px #2a2a2a;letter-spacing:0.125px;left:2437.03px;">TO DO</span>
<span class="t" style="font-size:28.2px;color:#3a4248;top:773.13px;-webkit-text-stroke:0.5px #3a4248;letter-spacing:0.578px;left:2739.75px;">Signatures &amp; Paperwork</span>
<span class="t" style="font-size:28.5px;color:#2a2a2a;top:843.38px;-webkit-text-stroke:0.42px #2a2a2a;letter-spacing:0.555px;left:335.81px;">Data Protection Agreement Signed</span>
<span class="t" style="font-size:28.5px;color:#9c9c9c;top:843.38px;letter-spacing:0.226px;left:1275.60px;">Add time</span>
<span class="t" style="font-size:28.5px;color:#525252;top:843.38px;letter-spacing:0.497px;left:1781.50px;">Normal</span>
<span class="t" style="font-size:23.4px;color:#2a2a2a;top:847.31px;-webkit-text-stroke:0.45px #2a2a2a;letter-spacing:0.125px;left:2437.03px;">TO DO</span>
<span class="t" style="font-size:28.2px;color:#3a4248;top:843.13px;-webkit-text-stroke:0.5px #3a4248;letter-spacing:0.578px;left:2739.75px;">Signatures &amp; Paperwork</span>
<span class="t" style="font-size:28.5px;color:#767676;top:914.17px;letter-spacing:-0.283px;left:337.80px;">Add Task</span>
<span class="t" style="font-size:28.2px;color:#125c48;top:1012.03px;-webkit-text-stroke:0.5px #125c48;letter-spacing:0.834px;left:238.65px;">Objectives</span>
<span class="t" style="font-size:23.9px;color:#8a8a8a;top:1014.69px;left:424.30px;">3</span>
<span class="t" style="font-size:23.9px;color:#8a8a8a;top:1014.88px;-webkit-text-stroke:0.2px #8a8a8a;letter-spacing:0.640px;left:550.20px;">Add Task</span>
<span class="t" style="font-size:23.9px;color:#858585;top:1079.29px;-webkit-text-stroke:0.25px #858585;letter-spacing:0.936px;left:232.43px;">Name</span>
<span class="t" style="font-size:23.9px;color:#858585;top:1079.29px;-webkit-text-stroke:0.25px #858585;letter-spacing:0.992px;left:995.62px;">Time estimate</span>
<span class="t" style="font-size:23.9px;color:#858585;top:1079.29px;-webkit-text-stroke:0.25px #858585;letter-spacing:1.150px;left:1253.83px;">Time tracked</span>
<span class="t" style="font-size:23.9px;color:#858585;top:1079.29px;-webkit-text-stroke:0.25px #858585;letter-spacing:0.822px;left:1509.12px;">Assignee</span>
<span class="t" style="font-size:23.9px;color:#858585;top:1079.29px;-webkit-text-stroke:0.25px #858585;letter-spacing:1.281px;left:1737.53px;">Priority</span>
<span class="t" style="font-size:23.9px;color:#858585;top:1079.29px;-webkit-text-stroke:0.25px #858585;letter-spacing:1.228px;left:1947.53px;">Start date</span>
<span class="t" style="font-size:23.9px;color:#858585;top:1079.29px;-webkit-text-stroke:0.25px #858585;letter-spacing:0.896px;left:2147.93px;">Due date</span>
<span class="t" style="font-size:23.9px;color:#858585;top:1079.29px;-webkit-text-stroke:0.25px #858585;letter-spacing:1.233px;left:2383.43px;">Status</span>
<span class="t" style="font-size:23.9px;color:#858585;top:1079.29px;-webkit-text-stroke:0.25px #858585;letter-spacing:0.288px;left:2735.53px;">Onboarding Process</span>
<span class="t" style="font-size:28.5px;color:#2a2a2a;top:1143.58px;-webkit-text-stroke:0.42px #2a2a2a;letter-spacing:0.630px;left:335.81px;">High-Level Objectives Agreed</span>
<span class="t" style="font-size:28.5px;color:#9c9c9c;top:1143.58px;letter-spacing:0.226px;left:1275.60px;">Add time</span>
<span class="t" style="font-size:28.5px;color:#525252;top:1143.58px;letter-spacing:0.497px;left:1781.50px;">Normal</span>
<span class="t" style="font-size:23.2px;color:#3a2500;top:1146.88px;-webkit-text-stroke:0.45px #3a2500;letter-spacing:0.036px;left:2435.03px;">IN PROGRESS</span>
<span class="t" style="font-size:28.2px;color:#125c48;top:1143.33px;-webkit-text-stroke:0.5px #125c48;letter-spacing:0.834px;left:2739.75px;">Objectives</span>
<span class="t" style="font-size:28.5px;color:#2a2a2a;top:1213.58px;-webkit-text-stroke:0.42px #2a2a2a;letter-spacing:0.590px;left:335.81px;">Existing Assets Collected</span>
<span class="t" style="font-size:28.5px;color:#9c9c9c;top:1213.58px;letter-spacing:0.226px;left:1275.60px;">Add time</span>
<span class="t" style="font-size:28.5px;color:#525252;top:1213.58px;letter-spacing:0.497px;left:1781.50px;">Normal</span>
<span class="t" style="font-size:23.4px;color:#2a2a2a;top:1217.51px;-webkit-text-stroke:0.45px #2a2a2a;letter-spacing:0.125px;left:2437.03px;">TO DO</span>
<span class="t" style="font-size:28.2px;color:#125c48;top:1213.33px;-webkit-text-stroke:0.5px #125c48;letter-spacing:0.834px;left:2739.75px;">Objectives</span>
<span class="t" style="font-size:28.5px;color:#2a2a2a;top:1283.58px;-webkit-text-stroke:0.42px #2a2a2a;letter-spacing:0.518px;left:336.81px;">Scope of Work Defined and Approved</span>
<span class="t" style="font-size:28.5px;color:#9c9c9c;top:1283.58px;letter-spacing:0.226px;left:1275.60px;">Add time</span>
<span class="t" style="font-size:28.5px;color:#525252;top:1283.58px;letter-spacing:0.497px;left:1781.50px;">Normal</span>
<span class="t" style="font-size:23.4px;color:#2a2a2a;top:1287.51px;-webkit-text-stroke:0.45px #2a2a2a;letter-spacing:0.125px;left:2437.03px;">TO DO</span>
<span class="t" style="font-size:28.2px;color:#125c48;top:1283.33px;-webkit-text-stroke:0.5px #125c48;letter-spacing:0.834px;left:2739.75px;">Objectives</span>
<span class="t" style="font-size:28.5px;color:#767676;top:1354.38px;letter-spacing:-0.283px;left:337.80px;">Add Task</span>
<span class="t" style="font-size:28.2px;color:#18588a;top:1451.43px;-webkit-text-stroke:0.5px #18588a;letter-spacing:1.070px;left:237.65px;">Reporting</span>
<span class="t" style="font-size:23.9px;color:#8a8a8a;top:1454.09px;left:413.40px;">3</span>
<span class="t" style="font-size:23.9px;color:#8a8a8a;top:1454.28px;-webkit-text-stroke:0.2px #8a8a8a;letter-spacing:0.640px;left:539.30px;">Add Task</span>
<span class="t" style="font-size:23.9px;color:#858585;top:1518.68px;-webkit-text-stroke:0.25px #858585;letter-spacing:0.936px;left:232.43px;">Name</span>
<span class="t" style="font-size:23.9px;color:#858585;top:1518.68px;-webkit-text-stroke:0.25px #858585;letter-spacing:0.992px;left:995.62px;">Time estimate</span>
<span class="t" style="font-size:23.9px;color:#858585;top:1518.68px;-webkit-text-stroke:0.25px #858585;letter-spacing:1.150px;left:1253.83px;">Time tracked</span>
<span class="t" style="font-size:23.9px;color:#858585;top:1518.68px;-webkit-text-stroke:0.25px #858585;letter-spacing:0.822px;left:1509.12px;">Assignee</span>
<span class="t" style="font-size:23.9px;color:#858585;top:1518.68px;-webkit-text-stroke:0.25px #858585;letter-spacing:1.281px;left:1737.53px;">Priority</span>
<span class="t" style="font-size:23.9px;color:#858585;top:1518.68px;-webkit-text-stroke:0.25px #858585;letter-spacing:1.228px;left:1947.53px;">Start date</span>
<span class="t" style="font-size:23.9px;color:#858585;top:1518.68px;-webkit-text-stroke:0.25px #858585;letter-spacing:0.896px;left:2147.93px;">Due date</span>
<span class="t" style="font-size:23.9px;color:#858585;top:1518.68px;-webkit-text-stroke:0.25px #858585;letter-spacing:1.233px;left:2383.43px;">Status</span>
<span class="t" style="font-size:23.9px;color:#858585;top:1518.68px;-webkit-text-stroke:0.25px #858585;letter-spacing:0.288px;left:2735.53px;">Onboarding Process</span>
<span class="t" style="font-size:28.5px;color:#2a2a2a;top:1582.98px;-webkit-text-stroke:0.42px #2a2a2a;letter-spacing:0.450px;left:336.81px;">Quarterly Review Scheduled</span>
<span class="t" style="font-size:28.5px;color:#9c9c9c;top:1582.98px;letter-spacing:0.226px;left:1275.60px;">Add time</span>
<span class="t" style="font-size:28.5px;color:#525252;top:1582.98px;letter-spacing:0.497px;left:1781.50px;">Normal</span>
<span class="t" style="font-size:23.4px;color:#2a2a2a;top:1586.91px;-webkit-text-stroke:0.45px #2a2a2a;letter-spacing:0.125px;left:2437.03px;">TO DO</span>
<span class="t" style="font-size:28.2px;color:#18588a;top:1582.73px;-webkit-text-stroke:0.5px #18588a;letter-spacing:1.070px;left:2738.75px;">Reporting</span>
<span class="t" style="font-size:28.5px;color:#2a2a2a;top:1652.98px;-webkit-text-stroke:0.42px #2a2a2a;letter-spacing:0.448px;left:335.81px;">Logins &amp; Access Granted</span>
<span class="t" style="font-size:28.5px;color:#9c9c9c;top:1652.98px;letter-spacing:0.226px;left:1275.60px;">Add time</span>
<span class="t" style="font-size:28.5px;color:#525252;top:1652.98px;letter-spacing:0.497px;left:1781.50px;">Normal</span>
<span class="t" style="font-size:23.4px;color:#2a2a2a;top:1656.91px;-webkit-text-stroke:0.45px #2a2a2a;letter-spacing:0.125px;left:2437.03px;">TO DO</span>
<span class="t" style="font-size:28.2px;color:#18588a;top:1652.73px;-webkit-text-stroke:0.5px #18588a;letter-spacing:1.070px;left:2738.75px;">Reporting</span>
<span class="t" style="font-size:28.5px;color:#2a2a2a;top:1722.98px;-webkit-text-stroke:0.42px #2a2a2a;letter-spacing:0.655px;left:335.81px;">Dashboard Optimised</span>
<span class="t" style="font-size:28.5px;color:#9c9c9c;top:1722.98px;letter-spacing:0.226px;left:1275.60px;">Add time</span>
<span class="t" style="font-size:28.5px;color:#525252;top:1722.98px;letter-spacing:0.497px;left:1781.50px;">Normal</span>
<span class="t" style="font-size:23.4px;color:#2a2a2a;top:1726.91px;-webkit-text-stroke:0.45px #2a2a2a;letter-spacing:0.125px;left:2437.03px;">TO DO</span>
<span class="t" style="font-size:28.2px;color:#18588a;top:1722.73px;-webkit-text-stroke:0.5px #18588a;letter-spacing:1.070px;left:2738.75px;">Reporting</span>
<span class="t" style="font-size:28.5px;color:#767676;top:1793.78px;letter-spacing:-0.283px;left:337.80px;">Add Task</span>
</div>
<div style="left:2819.0px;top:402.0px;width:105.0px;height:40.0px;background:linear-gradient(90deg,rgba(255,255,255,0) 0,#fff 27%,#fff 100%);z-index:2;"></div>
<div style="left:2836.0px;top:466.8px;width:87.6px;height:42.0px;background:linear-gradient(90deg,rgba(255,255,255,0) 0,rgba(255,255,255,.4) 38%,rgba(255,255,255,.82) 72%,#fff 97%);z-index:1;"></div>
<div style="left:2819.0px;top:702.0px;width:105.0px;height:40.0px;background:linear-gradient(90deg,rgba(255,255,255,0) 0,#fff 27%,#fff 100%);z-index:2;"></div>
<div style="left:2836.0px;top:766.8px;width:87.6px;height:42.0px;background:linear-gradient(90deg,rgba(255,255,255,0) 0,rgba(255,255,255,.4) 38%,rgba(255,255,255,.82) 72%,#fff 97%);z-index:1;"></div>
<div style="left:2836.0px;top:836.8px;width:87.6px;height:42.0px;background:linear-gradient(90deg,rgba(255,255,255,0) 0,rgba(255,255,255,.4) 38%,rgba(255,255,255,.82) 72%,#fff 97%);z-index:1;"></div>
<div style="left:2819.0px;top:1072.2px;width:105.0px;height:40.0px;background:linear-gradient(90deg,rgba(255,255,255,0) 0,#fff 27%,#fff 100%);z-index:2;"></div>
<div style="left:2836.0px;top:1137.0px;width:87.6px;height:42.0px;background:linear-gradient(90deg,rgba(255,255,255,0) 0,rgba(255,255,255,.4) 38%,rgba(255,255,255,.82) 72%,#fff 97%);z-index:1;"></div>
<div style="left:2836.0px;top:1207.0px;width:87.6px;height:42.0px;background:linear-gradient(90deg,rgba(255,255,255,0) 0,rgba(255,255,255,.4) 38%,rgba(255,255,255,.82) 72%,#fff 97%);z-index:1;"></div>
<div style="left:2836.0px;top:1277.0px;width:87.6px;height:42.0px;background:linear-gradient(90deg,rgba(255,255,255,0) 0,rgba(255,255,255,.4) 38%,rgba(255,255,255,.82) 72%,#fff 97%);z-index:1;"></div>
<div style="left:2819.0px;top:1511.6px;width:105.0px;height:40.0px;background:linear-gradient(90deg,rgba(255,255,255,0) 0,#fff 27%,#fff 100%);z-index:2;"></div>
<div style="left:2836.0px;top:1576.4px;width:87.6px;height:42.0px;background:linear-gradient(90deg,rgba(255,255,255,0) 0,rgba(255,255,255,.4) 38%,rgba(255,255,255,.82) 72%,#fff 97%);z-index:1;"></div>
<div style="left:2836.0px;top:1646.4px;width:87.6px;height:42.0px;background:linear-gradient(90deg,rgba(255,255,255,0) 0,rgba(255,255,255,.4) 38%,rgba(255,255,255,.82) 72%,#fff 97%);z-index:1;"></div>
<div style="left:2836.0px;top:1716.4px;width:87.6px;height:42.0px;background:linear-gradient(90deg,rgba(255,255,255,0) 0,rgba(255,255,255,.4) 38%,rgba(255,255,255,.82) 72%,#fff 97%);z-index:1;"></div>
<div style="left:2923.4px;top:235.0px;width:12.6px;height:1580.0px;background:#fcfcfc;border-left:2px solid #ebebeb;z-index:3;"></div>
<div style="left:129.0px;top:1747.3px;width:2794.6px;height:72.4px;background:#f8f8f8;border-top:2px solid #ececec;border-radius:0 0 10px 10px;z-index:3;"></div>
<div style="left:140.4px;top:1760.5px;width:190.4px;height:49.2px;background:#fff;border:1.8px solid #e9e9e9;border-radius:11px;box-shadow:0 1px 3px rgba(0,0,0,.06);z-index:4;"></div>
<svg class="ic" style="z-index:6" width="2936" height="1835" viewBox="0 0 2936 1835">
<g transform="translate(2875.50,420.30)"><circle cx="0" cy="0" r="12.4" fill="none" stroke="#858585" stroke-width="2.3"/><path d="M0,-6V6M-6,0H6" stroke="#858585" stroke-width="2.3" stroke-linecap="round"/></g>
<g transform="translate(2875.50,720.30)"><circle cx="0" cy="0" r="12.4" fill="none" stroke="#858585" stroke-width="2.3"/><path d="M0,-6V6M-6,0H6" stroke="#858585" stroke-width="2.3" stroke-linecap="round"/></g>
<g transform="translate(2875.50,1090.50)"><circle cx="0" cy="0" r="12.4" fill="none" stroke="#858585" stroke-width="2.3"/><path d="M0,-6V6M-6,0H6" stroke="#858585" stroke-width="2.3" stroke-linecap="round"/></g>
<g transform="translate(2875.50,1529.90)"><circle cx="0" cy="0" r="12.4" fill="none" stroke="#858585" stroke-width="2.3"/><path d="M0,-6V6M-6,0H6" stroke="#858585" stroke-width="2.3" stroke-linecap="round"/></g>
<g transform="translate(155.40,1771.60)"><path d="M1.6,1.6V24.6M1.6,2.6C6,0.6 11,5 17.6,2.4L14.6,9.4L17.6,16.2C11,18.6 6,14.4 1.6,16.4" fill="none" stroke="#6a6a6a" stroke-width="2.4" stroke-linecap="round" stroke-linejoin="round"/></g>
</svg>
<div class="tl" style="z-index:7">
<span class="t" style="font-size:23.9px;color:#2c2c2c;top:1773.49px;-webkit-text-stroke:0.45px #2c2c2c;letter-spacing:1.022px;left:187.72px;">4 Priorities</span>
</div>
</div></body></html>
